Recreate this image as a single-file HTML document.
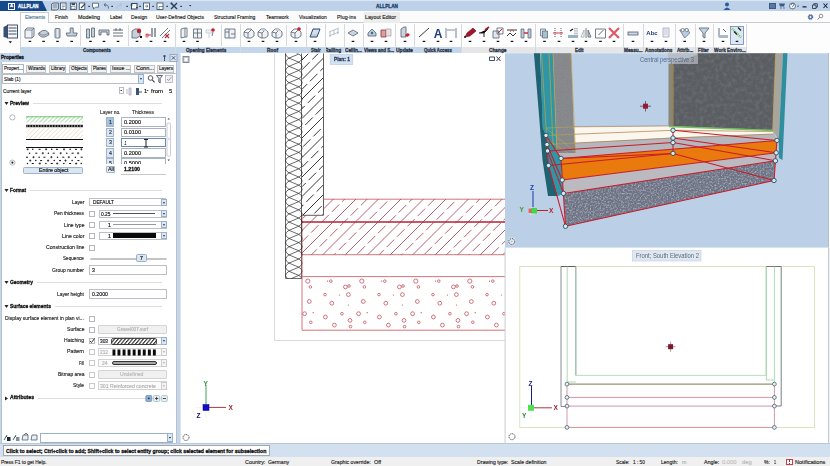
<!DOCTYPE html>
<html><head><meta charset="utf-8">
<style>
*{box-sizing:border-box;margin:0;padding:0}
html,body{width:830px;height:466px;overflow:hidden;background:#fff;font-family:"Liberation Sans",sans-serif;color:#222;position:relative}
.a{position:absolute}
svg{will-change:transform}
.t{position:absolute;white-space:nowrap;transform-origin:0 50%;-webkit-text-stroke:0.15px currentColor}
</style></head><body>
<div class="a" style="left:0.00px;top:0.00px;width:830.00px;height:11.00px;background:#bdd1e9;"></div>
<div class="a" style="left:0.00px;top:0.00px;width:830.00px;height:1.00px;background:#dbe6f2;"></div>
<div class="a" style="left:0;top:0.5px;width:47px;height:10.5px;background:#16488c;clip-path:polygon(0 0,42px 0,47px 10.5px,0 10.5px)"></div>
<div class="a" style="left:8.00px;top:2.50px;width:7.00px;height:7.00px;background:none;border:1px solid #fff;"></div>
<div class="t" style="left:10.20px;top:4.31px;font-size:4.27px;line-height:4.27px;color:#fff;font-weight:bold;-webkit-text-stroke:0.3px currentColor;transform:scaleX(0.998);">A</div>
<div class="t" style="left:18.00px;top:3.61px;font-size:5.70px;line-height:5.70px;color:#fff;font-weight:bold;-webkit-text-stroke:0.3px currentColor;transform:scaleX(0.771);">ALLPLAN</div>
<div class="t" style="left:376.00px;top:3.91px;font-size:5.70px;line-height:5.70px;color:#1d3a68;font-weight:bold;-webkit-text-stroke:0.3px currentColor;transform:scaleX(0.827);">ALLPLAN</div>
<div class="a" style="left:0.00px;top:11.00px;width:830.00px;height:11.50px;background:#fbfbfb;"></div>
<div class="a" style="left:0.00px;top:22.00px;width:830.00px;height:0.80px;background:#c8ccd2;"></div>
<div class="a" style="left:20.00px;top:11.50px;width:29.00px;height:11.50px;background:#ffffff;border:0.6px solid #c8ccd2;border-bottom:none;"></div>
<div class="a" style="left:364.00px;top:11.50px;width:35.50px;height:11.00px;background:#ececec;"></div>
<div class="t" style="left:25.00px;top:15.21px;font-size:5.70px;line-height:5.70px;color:#4e7a96;transform:scaleX(0.850);">Elements</div>
<div class="t" style="left:55.00px;top:15.21px;font-size:5.70px;line-height:5.70px;color:#1a1a1a;transform:scaleX(0.855);">Finish</div>
<div class="t" style="left:78.00px;top:15.21px;font-size:5.70px;line-height:5.70px;color:#1a1a1a;transform:scaleX(0.951);">Modeling</div>
<div class="t" style="left:109.50px;top:15.21px;font-size:5.70px;line-height:5.70px;color:#1a1a1a;transform:scaleX(0.868);">Label</div>
<div class="t" style="left:130.60px;top:15.21px;font-size:5.70px;line-height:5.70px;color:#1a1a1a;transform:scaleX(0.919);">Design</div>
<div class="t" style="left:155.90px;top:15.21px;font-size:5.70px;line-height:5.70px;color:#1a1a1a;transform:scaleX(0.881);">User-Defined Objects</div>
<div class="t" style="left:214.20px;top:15.21px;font-size:5.70px;line-height:5.70px;color:#1a1a1a;transform:scaleX(0.885);">Structural Framing</div>
<div class="t" style="left:266.00px;top:15.21px;font-size:5.70px;line-height:5.70px;color:#1a1a1a;transform:scaleX(0.874);">Teamwork</div>
<div class="t" style="left:298.90px;top:15.21px;font-size:5.70px;line-height:5.70px;color:#1a1a1a;transform:scaleX(0.868);">Visualization</div>
<div class="t" style="left:336.90px;top:15.21px;font-size:5.70px;line-height:5.70px;color:#1a1a1a;transform:scaleX(0.932);">Plug-ins</div>
<div class="t" style="left:365.00px;top:15.21px;font-size:5.70px;line-height:5.70px;color:#1a1a1a;transform:scaleX(0.923);">Layout Editor</div>
<div class="a" style="left:0.00px;top:23.00px;width:830.00px;height:24.50px;background:#fdfdfd;"></div>
<div class="a" style="left:0.00px;top:11.00px;width:20.00px;height:42.50px;background:#fdfdfd;"></div>
<div class="a" style="left:20.00px;top:47.30px;width:441.40px;height:6.00px;background:#c3d6ec;"></div>
<div class="a" style="left:461.40px;top:47.30px;width:285.00px;height:6.00px;background:#e6e6e8;"></div>
<div class="a" style="left:746.40px;top:47.30px;width:83.60px;height:6.00px;background:#fdfdfd;"></div>
<div class="t" style="left:83.00px;top:48.24px;font-size:5.22px;line-height:5.22px;color:#2a3444;font-weight:bold;-webkit-text-stroke:0.3px currentColor;transform:scaleX(0.868);">Components</div>
<div class="t" style="left:186.40px;top:48.24px;font-size:5.22px;line-height:5.22px;color:#2a3444;font-weight:bold;-webkit-text-stroke:0.3px currentColor;transform:scaleX(0.881);">Opening Elements</div>
<div class="t" style="left:267.00px;top:48.24px;font-size:5.22px;line-height:5.22px;color:#2a3444;font-weight:bold;-webkit-text-stroke:0.3px currentColor;transform:scaleX(0.925);">Roof</div>
<div class="t" style="left:310.80px;top:48.24px;font-size:5.22px;line-height:5.22px;color:#2a3444;font-weight:bold;-webkit-text-stroke:0.3px currentColor;transform:scaleX(0.835);">Stair</div>
<div class="t" style="left:325.30px;top:48.24px;font-size:5.22px;line-height:5.22px;color:#2a3444;font-weight:bold;-webkit-text-stroke:0.3px currentColor;transform:scaleX(0.924);">Railing</div>
<div class="t" style="left:344.60px;top:48.24px;font-size:5.22px;line-height:5.22px;color:#2a3444;font-weight:bold;-webkit-text-stroke:0.3px currentColor;transform:scaleX(0.904);">Ceilin...</div>
<div class="t" style="left:363.90px;top:48.24px;font-size:5.22px;line-height:5.22px;color:#2a3444;font-weight:bold;-webkit-text-stroke:0.3px currentColor;transform:scaleX(0.866);">Views and S...</div>
<div class="t" style="left:396.40px;top:48.24px;font-size:5.22px;line-height:5.22px;color:#2a3444;font-weight:bold;-webkit-text-stroke:0.3px currentColor;transform:scaleX(0.954);">Update</div>
<div class="t" style="left:424.00px;top:48.24px;font-size:5.22px;line-height:5.22px;color:#2a3444;font-weight:bold;-webkit-text-stroke:0.3px currentColor;transform:scaleX(0.816);">Quick Access</div>
<div class="t" style="left:488.90px;top:48.24px;font-size:5.22px;line-height:5.22px;color:#2a3444;font-weight:bold;-webkit-text-stroke:0.3px currentColor;transform:scaleX(0.913);">Change</div>
<div class="t" style="left:574.90px;top:48.24px;font-size:5.22px;line-height:5.22px;color:#2a3444;font-weight:bold;-webkit-text-stroke:0.3px currentColor;transform:scaleX(0.851);">Edit</div>
<div class="t" style="left:623.70px;top:48.24px;font-size:5.22px;line-height:5.22px;color:#2a3444;font-weight:bold;-webkit-text-stroke:0.3px currentColor;transform:scaleX(0.902);">Measu...</div>
<div class="t" style="left:644.80px;top:48.24px;font-size:5.22px;line-height:5.22px;color:#2a3444;font-weight:bold;-webkit-text-stroke:0.3px currentColor;transform:scaleX(0.902);">Annotations</div>
<div class="t" style="left:676.50px;top:48.24px;font-size:5.22px;line-height:5.22px;color:#2a3444;font-weight:bold;-webkit-text-stroke:0.3px currentColor;transform:scaleX(0.891);">Attrib...</div>
<div class="t" style="left:698.20px;top:48.24px;font-size:5.22px;line-height:5.22px;color:#2a3444;font-weight:bold;-webkit-text-stroke:0.3px currentColor;transform:scaleX(0.845);">Filter</div>
<div class="t" style="left:713.90px;top:48.24px;font-size:5.22px;line-height:5.22px;color:#2a3444;font-weight:bold;-webkit-text-stroke:0.3px currentColor;transform:scaleX(0.911);">Work Enviro...</div>
<div class="a" style="left:20.00px;top:23.00px;width:0.80px;height:30.30px;background:#d0d4da;"></div>
<div class="a" style="left:175.00px;top:24.00px;width:0.70px;height:29.30px;background:#d6d9de;"></div>
<div class="a" style="left:239.50px;top:24.00px;width:0.70px;height:29.30px;background:#d6d9de;"></div>
<div class="a" style="left:305.50px;top:24.00px;width:0.70px;height:29.30px;background:#d6d9de;"></div>
<div class="a" style="left:324.80px;top:24.00px;width:0.70px;height:29.30px;background:#d6d9de;"></div>
<div class="a" style="left:343.50px;top:24.00px;width:0.70px;height:29.30px;background:#d6d9de;"></div>
<div class="a" style="left:362.80px;top:24.00px;width:0.70px;height:29.30px;background:#d6d9de;"></div>
<div class="a" style="left:395.10px;top:24.00px;width:0.70px;height:29.30px;background:#d6d9de;"></div>
<div class="a" style="left:414.40px;top:24.00px;width:0.70px;height:29.30px;background:#d6d9de;"></div>
<div class="a" style="left:461.40px;top:24.00px;width:0.70px;height:29.30px;background:#d6d9de;"></div>
<div class="a" style="left:535.30px;top:24.00px;width:0.70px;height:29.30px;background:#d6d9de;"></div>
<div class="a" style="left:623.00px;top:24.00px;width:0.70px;height:29.30px;background:#d6d9de;"></div>
<div class="a" style="left:642.70px;top:24.00px;width:0.70px;height:29.30px;background:#d6d9de;"></div>
<div class="a" style="left:675.30px;top:24.00px;width:0.70px;height:29.30px;background:#d6d9de;"></div>
<div class="a" style="left:694.60px;top:24.00px;width:0.70px;height:29.30px;background:#d6d9de;"></div>
<div class="a" style="left:713.30px;top:24.00px;width:0.70px;height:29.30px;background:#d6d9de;"></div>
<div class="a" style="left:746.40px;top:24.00px;width:0.70px;height:29.30px;background:#d6d9de;"></div>
<div class="a" style="left:80.00px;top:25.00px;width:0.70px;height:21.00px;background:#d6d9de;"></div>
<div class="a" style="left:128.00px;top:25.00px;width:0.70px;height:21.00px;background:#d6d9de;"></div>
<div class="a" style="left:220.50px;top:25.00px;width:0.70px;height:21.00px;background:#d6d9de;"></div>
<div class="a" style="left:286.30px;top:25.00px;width:0.70px;height:21.00px;background:#d6d9de;"></div>
<svg class="a" style="left:0;top:0" width="830" height="60" viewBox="0 0 830 60">
<path d="M51.5,4 l2,-1 h5 v6 l-2,1 h-5z" fill="#c8d2de" stroke="#34465e" stroke-width="0.7"/><path d="M53,5 h4 M53,7 h4" stroke="#34465e" stroke-width="0.5"/><rect x="60.5" y="3" width="5.5" height="6.5" fill="#fff" stroke="#34465e" stroke-width="0.8"/><path d="M61.8,5 h3 M61.8,6.5 h3 M61.8,8 h2" stroke="#34465e" stroke-width="0.5"/><rect x="70.3" y="3" width="6" height="6.5" fill="#fff" stroke="#34465e" stroke-width="0.8"/><rect x="71.5" y="3.2" width="3.5" height="2" fill="#34465e"/><rect x="71.5" y="6.5" width="3.5" height="2.5" fill="#fff" stroke="#34465e" stroke-width="0.4"/><rect x="79.3" y="3" width="5.5" height="6.5" fill="#fff" stroke="#34465e" stroke-width="0.8"/><path d="M81,8 l4,-4" stroke="#34465e" stroke-width="1.1"/><path d="M92.5,3.2 h6 v4 h-3 l-2,1.8 v-1.8 h-1z" fill="#fff" stroke="#34465e" stroke-width="0.7"/><path d="M108.5,8.5 q0,-4.5 -4.5,-3.5 M104,5 l1.5,-1.8 M104,5 l1.8,1.3" fill="none" stroke="#5a6c84" stroke-width="1"/><path d="M117,8.5 q0,-4.5 4.5,-3.5 M121.5,5 l-1.5,-1.8 M121.5,5 l-1.8,1.3" fill="none" stroke="#b0bcc8" stroke-width="0.9"/><rect x="131.5" y="3.5" width="5.5" height="5.5" fill="#fff" stroke="#34465e" stroke-width="1"/><path d="M130.5,5 h2 M136,7.5 h2" stroke="#34465e" stroke-width="1"/><rect x="143.5" y="3" width="6" height="6.5" fill="#fff" stroke="#34465e" stroke-width="0.8"/><path d="M145,6.2 h3 M146.5,4.8 l1.5,1.4 l-1.5,1.4" fill="none" stroke="#34465e" stroke-width="0.6"/><rect x="157" y="3" width="6" height="6.5" fill="#fff" stroke="#34465e" stroke-width="0.8"/><path d="M159,9.5 v-3 h4" fill="none" stroke="#34465e" stroke-width="0.6"/><path d="M171,3 l6,6 M177,3 l-6,6" stroke="#2a3a52" stroke-width="1.3"/><circle cx="171.5" cy="3.5" r="1" fill="#2a3a52"/><rect x="88.4" y="5.8" width="1.4" height="1.2" fill="#222"/><rect x="111.4" y="5.8" width="1.4" height="1.2" fill="#222"/><rect x="126.4" y="5.8" width="1.4" height="1.2" fill="#222"/><rect x="139.4" y="5.8" width="1.4" height="1.2" fill="#222"/><rect x="152.4" y="5.8" width="1.4" height="1.2" fill="#222"/><rect x="166.4" y="5.8" width="1.4" height="1.2" fill="#222"/><rect x="180.4" y="5.8" width="1.4" height="1.2" fill="#222"/><path d="M189,5 h2.4 l-1.2,1.4z" fill="#333"/><path d="M723.5,10 q3.5,-5 7,0z" fill="#2f5a98"/><circle cx="727" cy="4.6" r="2" fill="#2f5a98"/><rect x="769" y="3" width="7" height="6" fill="#3a5a88"/><path d="M770,5 h5 M770,7 h5" stroke="#c3d5ea" stroke-width="0.5"/><path d="M779,3.5 h6 l-1,3 h-4z" fill="#3a5a88"/><circle cx="781" cy="8" r="0.7" fill="#3a5a88"/><circle cx="784" cy="8" r="0.7" fill="#3a5a88"/><circle cx="792.5" cy="6" r="3" fill="#f4f6f8" stroke="#3a4a60" stroke-width="0.7"/><path d="M791.3,5 q0,-1.5 1.3,-1.5 q1.3,0 1.3,1.2 q0,0.8 -1.2,1.3 v0.8" fill="none" stroke="#3a4a60" stroke-width="0.7"/><circle cx="792.6" cy="8.2" r="0.4" fill="#3a4a60"/><path d="M797,5.8 h2 l-1,1.2z" fill="#333"/><rect x="802.5" y="6.2" width="4" height="1.3" fill="#1a2a40"/><path d="M812.5,5 h3.5 v3.5 h-3.5z M813.8,5 v-1.3 h3.5 v3.5 h-1.3" fill="none" stroke="#1a2a40" stroke-width="0.8"/><path d="M823.5,3.5 l4,4.5 M827.5,3.5 l-4,4.5" stroke="#1a2a40" stroke-width="1.1"/><circle cx="810.5" cy="17" r="2.2" fill="#5a7aa8" stroke="#4a6a98" stroke-width="1.2" stroke-dasharray="1 0.6"/><circle cx="810.5" cy="17" r="0.9" fill="#f4f6f8"/><circle cx="821" cy="16" r="1.8" fill="none" stroke="#707880" stroke-width="0.8"/><path d="M819.7,17.3 l-2,2.2" stroke="#707880" stroke-width="1"/><path d="M3.5,27 l4,-2 v13 l-4,-1z" fill="#3a5070"/><rect x="7.5" y="25" width="10" height="13" fill="#f4f6fa" stroke="#2a4060" stroke-width="0.9"/><path d="M8.5,28 h8 M8.5,31 h8 M8.5,34 h8" stroke="#2a4060" stroke-width="0.9"/><path d="M25.0,30 l2,-2 h7 v8 l-2,2 h-7z" fill="#eef2f6" stroke="#56606e" stroke-width="0.8"/><path d="M25.0,30 h7 v8 M32.0,30 l2,-2" fill="none" stroke="#56606e" stroke-width="0.7"/><path d="M38.8,33 l4,-2.5 h3 l3,2.5 v2 l-4,2 h-3 l-3,-2z" fill="#c4d0dc" stroke="#56606e" stroke-width="0.8"/><path d="M38.8,33 l3,2 h3 l4,-2" fill="none" stroke="#56606e" stroke-width="0.6"/><rect x="55.0" y="28.5" width="5" height="9.5" rx="1" fill="#c4d0dc" stroke="#56606e" stroke-width="0.8"/><line x1="57.5" y1="29" x2="57.5" y2="37.5" stroke="#eef" stroke-width="0.8"/><path d="M70.2,28 h3 v5 h4 l-1,3 h-9 l-1,-3 h4z" fill="#c4d0dc" stroke="#56606e" stroke-width="0.8"/><path d="M86.5,29 h3 v9 h-3z M91.5,28 h3 v9 h-3z" fill="#c4d0dc" stroke="#56606e" stroke-width="0.8"/><path d="M99,35 v-5 h10 v5 h-2 v-3 h-6 v3z" fill="#c4d0dc" stroke="#56606e" stroke-width="0.8"/><path d="M113,30 h10 M113,33 h10 M113,36 h10 M116,28 v3 M120,28 v3" fill="none" stroke="#56606e" stroke-width="0.9"/><path d="M132,31 l3,-2 h5 v7 l-3,2 h-5z" fill="#c4d0dc" stroke="#56606e" stroke-width="0.8"/><circle cx="139" cy="31" r="2.2" fill="#c8202e"/><rect x="140" y="36" width="2" height="2" fill="#111"/><path d="M152,28 v9 M155,28 v9" stroke="#56606e" stroke-width="1.2"/><path d="M146,35 h5" stroke="#c8202e" stroke-width="0.9"/><rect x="146" y="34" width="2" height="3" fill="none" stroke="#c8202e" stroke-width="0.6"/><path d="M160,36 l8,-8 M162,38 l8,-8" stroke="#56606e" stroke-width="0.8"/><path d="M165,34 l4,4 M169,34 l-4,4" stroke="#c8202e" stroke-width="1.1"/><path d="M181,29 l4,-1 v9 l-4,1z" fill="#eef2f6" stroke="#56606e" stroke-width="0.8"/><path d="M185,28 h2 v9 h-2" fill="none" stroke="#56606e" stroke-width="0.8"/><path d="M193.5,29 h8 v9 h-8z M197.5,29 v9 M193.5,33 h8" fill="#eef2f6" stroke="#56606e" stroke-width="0.8"/><path d="M206,30 h6 v3 h-6z M209,33 v5" fill="#eef2f6" stroke="#c4d0dc" stroke-width="0.9"/><circle cx="213" cy="30" r="1.8" fill="#c8202e"/><line x1="213" y1="32" x2="212" y2="36" stroke="#56606e" stroke-width="0.8"/><path d="M225,29 h10 v9 h-10z M229,29 v9 M225,32 h4 M231,34 h4" fill="#eef2f6" stroke="#56606e" stroke-width="0.8"/><path d="M244,36 v-4 l3,-3 h4 l3,3 v4 l-3,2 h-4z M244,32 l4,1 l4,-4 M248,33 v5" fill="#eef2f6" stroke="#56606e" stroke-width="0.8"/><path d="M258,36 v-4 l3,-3 h4 l3,3 v4 l-3,2 h-4z M258,32 l4,1 l4,-4 M262,33 v5" fill="#eef2f6" stroke="#56606e" stroke-width="0.8"/><path d="M261,29 h4 l2,2 h-5z" fill="#c4d0dc"/><path d="M272,36 v-4 l3,-3 h4 l3,3 v4 l-3,2 h-4z M272,32 l4,1 l4,-4 M276,33 v5" fill="#eef2f6" stroke="#56606e" stroke-width="0.8"/><path d="M275,29 h4 l2,2 h-5z" fill="#c4d0dc"/><path d="M291,36 v-4 l3,-3 h4 l3,3 v4 l-3,2 h-4z M291,32 l4,1 l4,-4 M295,33 v5" fill="#eef2f6" stroke="#56606e" stroke-width="0.8"/><circle cx="299" cy="29" r="1.8" fill="#c8202e"/><path d="M310,37 l3,-8 h7 l-3,8z" fill="#c4d0dc" stroke="#2c4a7a" stroke-width="1"/><path d="M312,33 h6 M313,31 h6" stroke="#fff" stroke-width="0.6"/><path d="M329,36 l10,-4 M329,32 l10,-4 M330,32 v5 M334,30 v5 M338,29 v5" fill="none" stroke="#a8b4c0" stroke-width="0.8"/><path d="M348,33 l5,-3 l5,3 l-5,3z" fill="#c4d0dc" stroke="#56606e" stroke-width="0.8"/><path d="M350,33 l3,2 M353,31 l3,2" stroke="#dfe8f0" stroke-width="0.6"/><path d="M368,36 v-3 l4,-4 l4,4 v3z" fill="#b8cce0" stroke="#56606e" stroke-width="0.8"/><circle cx="372" cy="33" r="1.2" fill="#56606e"/><path d="M381,30 h5 v7 h-5z" fill="#d8a0a0" stroke="#903040" stroke-width="0.8"/><path d="M386,29 h5 v7 h-5z" fill="#e8e0e0" stroke="#a09090" stroke-width="0.6"/><path d="M401,37 v-8 l3,-2 h2 v10z" fill="#c8d4e0" stroke="#56606e" stroke-width="0.8"/><path d="M405,35 l3,-2 l2,2 l-3,2z" fill="#c8202e"/><line x1="419" y1="37" x2="429" y2="28" stroke="#222" stroke-width="0.9"/><text x="438" y="37.5" text-anchor="middle" font-family="Liberation Sans" font-weight="bold" font-size="12" fill="#1e3c78">A</text><path d="M446,28 v10 M456,28 v10" stroke="#8a9aaa" stroke-width="1.2"/><path d="M447,30 h8" stroke="#56606e" stroke-width="0.7"/><path d="M465,37 l2,-4 l6,-5 l3,3 l-6,5z" fill="#a01828" stroke="#701020" stroke-width="0.6"/><circle cx="465" cy="37" r="1" fill="#111"/><path d="M479,33 h5 l4,-4" stroke="#222" stroke-width="1"/><path d="M484,33 v4" stroke="#222" stroke-width="1"/><path d="M485,30 l4,-3" stroke="#a01828" stroke-width="1.6"/><path d="M493,31 h6 v7 h-6z" fill="#e0e8f0" stroke="#56606e" stroke-width="0.8"/><path d="M497,28 h6 v6 h-6z" fill="none" stroke="#56606e" stroke-width="0.8"/><path d="M498,33 l4,-4" stroke="#c8202e" stroke-width="1"/><path d="M507,30 h10 M507,36 l3,-3 l3,3 l3,-3" fill="none" stroke="#222" stroke-width="0.9"/><path d="M510,32 l2,-2 l2,2" fill="none" stroke="#c8202e" stroke-width="0.6"/><path d="M521,29 h3 v9 h-3z M528,29 h3 v9 h-3z" fill="#b8c8d8" stroke="#56606e" stroke-width="0.7"/><path d="M524,33 h4" stroke="#c8202e" stroke-width="1.4"/><path d="M540.5,29 h5 v7 h-5z" fill="#dfe6ee" stroke="#56606e" stroke-width="0.7"/><path d="M542.5,31 h5 v7 h-5z" fill="#a8c0d8" stroke="#56606e" stroke-width="0.7"/><path d="M555,28 v10 M561,28 v10" stroke="#56606e" stroke-width="1" stroke-dasharray="1 1"/><path d="M553,33 h10" stroke="#c8202e" stroke-width="0.9"/><path d="M568,37 h10 M577,28 v8 M575,28 v8" stroke="#56606e" stroke-width="0.8" stroke-dasharray="1 0.7"/><rect x="568" y="35" width="10" height="3" fill="#98b0c8"/><path d="M570,31 l3,-2" stroke="#222" stroke-width="1.4"/><path d="M581,37 l3,-7 v7z" fill="none" stroke="#a0a8b0" stroke-width="0.8"/><path d="M586,28 v10" stroke="#56606e" stroke-width="0.8"/><path d="M588,37 v-7 l3,7z" fill="#c0d0e0" stroke="#56606e" stroke-width="0.8"/><path d="M595.5,29 h10 v9 h-10z" fill="none" stroke="#56606e" stroke-width="0.8"/><path d="M598.5,35 l5,-5" stroke="#222" stroke-width="0.7"/><path d="M609,28 l10,10 M619,28 l-10,10" stroke="#e25566" stroke-width="2.1"/><rect x="628" y="32" width="10" height="3" fill="#c8d8e8" stroke="#56606e" stroke-width="0.8"/><text x="652" y="35" text-anchor="middle" font-family="Liberation Sans" font-weight="bold" font-size="6" fill="#1e3c78">Abc</text><path d="M663,28 h6 v9 h-6z" fill="#eef" stroke="#a0a8b0" stroke-width="0.8"/><path d="M665,29 v6 M667,29 v6" stroke="#a0a8b0" stroke-width="0.5"/><path d="M679.7,30 l5,8 l5,-5 l-2,-4z" fill="#b8cce4" stroke="#56606e" stroke-width="0.7"/><circle cx="682.7" cy="30" r="1.6" fill="#fff" stroke="#56606e" stroke-width="0.7"/><circle cx="686.7" cy="30" r="1.6" fill="#fff" stroke="#56606e" stroke-width="0.7"/><path d="M699,28 h10 l-4,5 v5 l-2,-1 v-4z" fill="#c0d4e8" stroke="#56606e" stroke-width="0.8"/><path d="M719,28 v9 h9" fill="none" stroke="#56606e" stroke-width="0.9"/><path d="M723,29 l3,3" stroke="#222" stroke-width="0.7"/><rect x="719" y="35" width="9" height="2" fill="#a8bcd0"/><rect x="730.5" y="26.5" width="13" height="18" fill="#dde8f4" stroke="#6a88b0" stroke-width="0.8"/><path d="M732,28.5 l9,9" stroke="#70c060" stroke-width="2.4" stroke-dasharray="1 1"/><path d="M734,31.5 l3,3 M738,27.5 l3,3" stroke="#222" stroke-width="1.3"/><rect x="28.60" y="40.80" width="2.6" height="1.2" fill="#111"/><rect x="42.30" y="40.80" width="2.6" height="1.2" fill="#111"/><rect x="56.20" y="40.80" width="2.6" height="1.2" fill="#111"/><rect x="70.40" y="40.80" width="2.6" height="1.2" fill="#111"/><rect x="89.20" y="40.80" width="2.6" height="1.2" fill="#111"/><rect x="102.70" y="40.80" width="2.6" height="1.2" fill="#111"/><rect x="116.70" y="40.80" width="2.6" height="1.2" fill="#111"/><rect x="135.70" y="40.80" width="2.6" height="1.2" fill="#111"/><rect x="149.70" y="40.80" width="2.6" height="1.2" fill="#111"/><rect x="163.70" y="40.80" width="2.6" height="1.2" fill="#111"/><rect x="182.70" y="40.80" width="2.6" height="1.2" fill="#111"/><rect x="196.20" y="40.80" width="2.6" height="1.2" fill="#111"/><rect x="247.70" y="40.80" width="2.6" height="1.2" fill="#111"/><rect x="261.70" y="40.80" width="2.6" height="1.2" fill="#111"/><rect x="275.70" y="40.80" width="2.6" height="1.2" fill="#111"/><rect x="294.70" y="40.80" width="2.6" height="1.2" fill="#111"/><rect x="313.70" y="40.80" width="2.6" height="1.2" fill="#111"/><rect x="351.70" y="40.80" width="2.6" height="1.2" fill="#111"/><rect x="370.70" y="40.80" width="2.6" height="1.2" fill="#111"/><rect x="384.70" y="40.80" width="2.6" height="1.2" fill="#111"/><rect x="403.70" y="40.80" width="2.6" height="1.2" fill="#111"/><rect x="422.70" y="40.80" width="2.6" height="1.2" fill="#111"/><rect x="436.70" y="40.80" width="2.6" height="1.2" fill="#111"/><rect x="449.70" y="40.80" width="2.6" height="1.2" fill="#111"/><rect x="468.70" y="40.80" width="2.6" height="1.2" fill="#111"/><rect x="482.70" y="40.80" width="2.6" height="1.2" fill="#111"/><rect x="496.70" y="40.80" width="2.6" height="1.2" fill="#111"/><rect x="510.70" y="40.80" width="2.6" height="1.2" fill="#111"/><rect x="524.70" y="40.80" width="2.6" height="1.2" fill="#111"/><rect x="543.20" y="40.80" width="2.6" height="1.2" fill="#111"/><rect x="557.70" y="40.80" width="2.6" height="1.2" fill="#111"/><rect x="571.70" y="40.80" width="2.6" height="1.2" fill="#111"/><rect x="584.70" y="40.80" width="2.6" height="1.2" fill="#111"/><rect x="599.20" y="40.80" width="2.6" height="1.2" fill="#111"/><rect x="612.70" y="40.80" width="2.6" height="1.2" fill="#111"/><rect x="631.70" y="40.80" width="2.6" height="1.2" fill="#111"/><rect x="650.70" y="40.80" width="2.6" height="1.2" fill="#111"/><rect x="664.70" y="40.80" width="2.6" height="1.2" fill="#111"/><rect x="683.40" y="40.80" width="2.6" height="1.2" fill="#111"/><rect x="702.70" y="40.80" width="2.6" height="1.2" fill="#111"/><rect x="721.70" y="40.80" width="2.6" height="1.2" fill="#111"/><rect x="735.70" y="40.80" width="2.6" height="1.2" fill="#111"/><path d="M8.6,41.2 h3.4 l-1.7,2z" fill="#111"/></svg>
<div class="a" style="left:0.00px;top:53.30px;width:180.00px;height:391.00px;background:#c3d6ec;"></div>
<div class="t" style="left:1.00px;top:55.21px;font-size:5.70px;line-height:5.70px;color:#111;font-weight:bold;-webkit-text-stroke:0.3px currentColor;transform:scaleX(0.816);">Properties</div>
<div class="a" style="left:161.00px;top:54.50px;width:7.00px;height:7.00px;background:#c3d6ec;"></div>
<svg class="a" style="left:160px;top:54px" width="20" height="8"><path d="M4.5,1.5 v4 M3,2 h3 M4.5,5.5 v1.5" stroke="#334" stroke-width="0.9"/><rect x="10" y="0.5" width="7" height="7" fill="#d6e4f4" stroke="#9ab"/><path d="M11.8,2.2 l3.4,3.4 M15.2,2.2 l-3.4,3.4" stroke="#334" stroke-width="0.8"/></svg>
<div class="a" style="left:0.50px;top:62.00px;width:176.30px;height:382.00px;background:#ffffff;border-left:0.8px solid #b8c0c8;border-right:0.8px solid #b8c0c8;"></div>
<div class="a" style="left:2.00px;top:63.50px;width:22.00px;height:9.50px;background:#ffffff;border:0.7px solid #b0b8c0;border-bottom:none;"></div>
<div class="t" style="left:3.50px;top:66.44px;font-size:5.22px;line-height:5.22px;color:#111;transform:scaleX(0.884);">Propert...</div>
<div class="a" style="left:26.00px;top:64.50px;width:20.00px;height:8.00px;background:#f2f2f2;border:0.7px solid #c0c4c8;"></div>
<div class="t" style="left:27.50px;top:66.44px;font-size:5.22px;line-height:5.22px;color:#111;transform:scaleX(0.901);">Wizards</div>
<div class="a" style="left:49.00px;top:64.50px;width:17.00px;height:8.00px;background:#f2f2f2;border:0.7px solid #c0c4c8;"></div>
<div class="t" style="left:50.50px;top:66.44px;font-size:5.22px;line-height:5.22px;color:#111;transform:scaleX(0.877);">Library</div>
<div class="a" style="left:69.00px;top:64.50px;width:19.00px;height:8.00px;background:#f2f2f2;border:0.7px solid #c0c4c8;"></div>
<div class="t" style="left:70.50px;top:66.44px;font-size:5.22px;line-height:5.22px;color:#111;transform:scaleX(0.903);">Objects</div>
<div class="a" style="left:91.00px;top:64.50px;width:16.00px;height:8.00px;background:#f2f2f2;border:0.7px solid #c0c4c8;"></div>
<div class="t" style="left:92.50px;top:66.44px;font-size:5.22px;line-height:5.22px;color:#111;transform:scaleX(0.814);">Planes</div>
<div class="a" style="left:110.00px;top:64.50px;width:21.00px;height:8.00px;background:#f2f2f2;border:0.7px solid #c0c4c8;"></div>
<div class="t" style="left:111.50px;top:66.44px;font-size:5.22px;line-height:5.22px;color:#111;transform:scaleX(0.984);">Issue ...</div>
<div class="a" style="left:134.00px;top:64.50px;width:21.00px;height:8.00px;background:#f2f2f2;border:0.7px solid #c0c4c8;"></div>
<div class="t" style="left:135.50px;top:66.44px;font-size:5.22px;line-height:5.22px;color:#111;transform:scaleX(1.068);">Conn...</div>
<div class="a" style="left:157.00px;top:64.50px;width:17.00px;height:8.00px;background:#f2f2f2;border:0.7px solid #c0c4c8;"></div>
<div class="t" style="left:158.50px;top:66.44px;font-size:5.22px;line-height:5.22px;color:#111;transform:scaleX(0.893);">Layers</div>
<div class="a" style="left:0.50px;top:72.80px;width:176.00px;height:0.70px;background:#b8c0c8;"></div>
<div class="a" style="left:2.00px;top:74.00px;width:142.00px;height:10.30px;background:#fff;border:0.7px solid #bcc0c4;"></div>
<div class="t" style="left:4.00px;top:76.91px;font-size:5.70px;line-height:5.70px;color:#111;transform:scaleX(0.827);">Slab (1)</div>
<div class="a" style="left:138.00px;top:74.30px;width:6.00px;height:9.80px;background:#dce8f6;border:0.6px solid #9ab0cc;"></div>
<svg class="a" style="left:138px;top:74.3px" width="6" height="9.8"><path d="M1.8,4.2 h2.4 l-1.2,1.5z" fill="#222"/></svg>
<svg class="a" style="left:146px;top:74px" width="30" height="11"><circle cx="4.5" cy="4" r="2.3" fill="none" stroke="#445" stroke-width="0.9"/><path d="M6.2,5.8 l2.4,2.6" stroke="#445" stroke-width="1.2"/><path d="M10.5,1.5 h6 l-2.3,3 v4.5 l-1.4,-1 v-3.5z" fill="#dde6f0" stroke="#445" stroke-width="0.8"/><rect x="19.5" y="1.5" width="7" height="7" fill="#f0f0f0" stroke="#aab" stroke-width="0.7"/><path d="M21,5 l1.5,1.5 l3,-3.5" fill="none" stroke="#889" stroke-width="0.8"/></svg>
<div class="t" style="left:3.00px;top:88.61px;font-size:5.70px;line-height:5.70px;color:#111;transform:scaleX(0.865);">Current layer</div>
<div class="a" style="left:119.00px;top:87.00px;width:4.50px;height:7.00px;background:#fff;border:0.6px solid #bbb;"></div>
<svg class="a" style="left:119px;top:87px" width="60" height="9"><path d="M1.2,3 h2 l-1,1.3z" fill="#222"/><path d="M8,2 v5 M10,1 h2 v7 h-2z" stroke="#aab" stroke-width="0.8" fill="#dde"/><path d="M17,1 h3 v7 h-3z" fill="#3a5478"/><path d="M20,5 h3" stroke="#3a5478" stroke-width="1"/></svg>
<div class="t" style="left:143.50px;top:88.61px;font-size:5.70px;line-height:5.70px;color:#111;transform:scaleX(0.998);">1</div>
<svg class="a" style="left:146px;top:89px" width="4" height="3"><path d="M0.3,1 h2.4 l-1.2,1.3z" fill="#333"/></svg>
<div class="t" style="left:151.00px;top:88.61px;font-size:5.70px;line-height:5.70px;color:#111;transform:scaleX(1.053);">from</div>
<div class="t" style="left:168.50px;top:88.61px;font-size:5.70px;line-height:5.70px;color:#111;transform:scaleX(0.998);">5</div>
<svg class="a" style="left:4px;top:101.2px" width="5" height="5"><path d="M0.5,1 h4 l-2,3z" fill="#222"/></svg>
<div class="t" style="left:10.00px;top:100.81px;font-size:5.70px;line-height:5.70px;color:#111;font-weight:bold;-webkit-text-stroke:0.3px currentColor;transform:scaleX(0.882);">Preview</div>
<div class="a" style="left:33.00px;top:103.00px;width:129.00px;height:1.20px;background:#dedede;"></div>
<svg class="a" style="left:8px;top:113px" width="10" height="55"><circle cx="4.4" cy="4.4" r="2.6" fill="#fff" stroke="#889" stroke-width="0.6"/><circle cx="4.4" cy="49.6" r="2.6" fill="#fff" stroke="#889" stroke-width="0.6"/><circle cx="4.4" cy="49.6" r="1.1" fill="#222"/></svg>
<svg class="a" style="left:25px;top:114px" width="60" height="52" viewBox="25 114 60 52"><defs><pattern id="gh" width="3" height="3" patternUnits="userSpaceOnUse" patternTransform="rotate(45)"><line x1="0" y1="0" x2="0" y2="3" stroke="#50b850" stroke-width="0.9"/></pattern><pattern id="oh" width="3.2" height="3.2" patternUnits="userSpaceOnUse" patternTransform="rotate(45)"><line x1="0" y1="0" x2="0" y2="3.2" stroke="#d8b890" stroke-width="0.7"/></pattern></defs><rect x="26" y="116.5" width="57" height="6" fill="url(#gh)"/><line x1="26" y1="116.8" x2="83" y2="116.8" stroke="#60c060" stroke-width="0.9"/><rect x="26" y="124.8" width="57" height="2.4" fill="#111"/><line x1="26.5" y1="126" x2="83" y2="126" stroke="#fff" stroke-width="1" stroke-dasharray="1.2 1.6"/><rect x="26" y="128" width="57" height="10.5" fill="url(#oh)"/><line x1="26" y1="139.5" x2="83" y2="139.5" stroke="#111" stroke-width="1"/><line x1="26" y1="147.5" x2="83" y2="147.5" stroke="#111" stroke-width="1"/><path d="M26.6,149.3 h2.2 M27.7,148.20000000000002 v2.2" stroke="#111" stroke-width="0.7"/><circle cx="32.8" cy="149.3" r="0.75" fill="#111"/><rect x="38.6" y="148.8" width="2" height="1" fill="#111"/><path d="M45.0,149.3 h2.2 M46.1,148.20000000000002 v2.2" stroke="#111" stroke-width="0.7"/><circle cx="51.7" cy="149.3" r="0.75" fill="#111"/><rect x="56.0" y="148.8" width="2" height="1" fill="#111"/><path d="M62.9,149.3 h2.2 M64.0,148.20000000000002 v2.2" stroke="#111" stroke-width="0.7"/><circle cx="70.1" cy="149.3" r="0.75" fill="#111"/><rect x="74.9" y="148.8" width="2" height="1" fill="#111"/><path d="M80.3,149.3 h2.2 M81.4,148.20000000000002 v2.2" stroke="#111" stroke-width="0.7"/><circle cx="29.5" cy="153.2" r="0.75" fill="#111"/><rect x="35.3" y="152.7" width="2" height="1" fill="#111"/><path d="M41.7,153.2 h2.2 M42.8,152.1 v2.2" stroke="#111" stroke-width="0.7"/><circle cx="48.4" cy="153.2" r="0.75" fill="#111"/><rect x="52.7" y="152.7" width="2" height="1" fill="#111"/><path d="M59.6,153.2 h2.2 M60.7,152.1 v2.2" stroke="#111" stroke-width="0.7"/><circle cx="66.8" cy="153.2" r="0.75" fill="#111"/><rect x="71.6" y="152.7" width="2" height="1" fill="#111"/><path d="M77.0,153.2 h2.2 M78.1,152.1 v2.2" stroke="#111" stroke-width="0.7"/><rect x="26.0" y="156.7" width="2" height="1" fill="#111"/><path d="M32.4,157.2 h2.2 M33.5,156.1 v2.2" stroke="#111" stroke-width="0.7"/><circle cx="39.1" cy="157.2" r="0.75" fill="#111"/><rect x="43.4" y="156.7" width="2" height="1" fill="#111"/><path d="M50.3,157.2 h2.2 M51.4,156.1 v2.2" stroke="#111" stroke-width="0.7"/><circle cx="57.5" cy="157.2" r="0.75" fill="#111"/><rect x="62.3" y="156.7" width="2" height="1" fill="#111"/><path d="M67.7,157.2 h2.2 M68.8,156.1 v2.2" stroke="#111" stroke-width="0.7"/><circle cx="75.4" cy="157.2" r="0.75" fill="#111"/><rect x="80.7" y="156.7" width="2" height="1" fill="#111"/><path d="M29.1,160.6 h2.2 M30.2,159.5 v2.2" stroke="#111" stroke-width="0.7"/><circle cx="35.8" cy="160.6" r="0.75" fill="#111"/><rect x="40.1" y="160.1" width="2" height="1" fill="#111"/><path d="M47.0,160.6 h2.2 M48.1,159.5 v2.2" stroke="#111" stroke-width="0.7"/><circle cx="54.2" cy="160.6" r="0.75" fill="#111"/><rect x="59.0" y="160.1" width="2" height="1" fill="#111"/><path d="M64.4,160.6 h2.2 M65.5,159.5 v2.2" stroke="#111" stroke-width="0.7"/><circle cx="72.1" cy="160.6" r="0.75" fill="#111"/><rect x="77.4" y="160.1" width="2" height="1" fill="#111"/><circle cx="27.5" cy="163.5" r="0.75" fill="#111"/><rect x="31.8" y="163.0" width="2" height="1" fill="#111"/><path d="M38.7,163.5 h2.2 M39.8,162.4 v2.2" stroke="#111" stroke-width="0.7"/><circle cx="45.9" cy="163.5" r="0.75" fill="#111"/><rect x="50.7" y="163.0" width="2" height="1" fill="#111"/><path d="M56.1,163.5 h2.2 M57.2,162.4 v2.2" stroke="#111" stroke-width="0.7"/><circle cx="63.8" cy="163.5" r="0.75" fill="#111"/><rect x="69.1" y="163.0" width="2" height="1" fill="#111"/><path d="M75.0,163.5 h2.2 M76.1,162.4 v2.2" stroke="#111" stroke-width="0.7"/><circle cx="81.2" cy="163.5" r="0.75" fill="#111"/></svg>
<div class="a" style="left:23.40px;top:166.50px;width:60.00px;height:7.20px;background:#dbe6f3;border:0.7px solid #9fb3cc;border-radius:1.5px;"></div>
<div class="t" style="left:38.50px;top:167.94px;font-size:5.22px;line-height:5.22px;color:#111;transform:scaleX(1.016);">Entire object</div>
<div class="t" style="left:99.50px;top:109.84px;font-size:5.22px;line-height:5.22px;color:#333;transform:scaleX(0.941);">Layer no.</div>
<div class="t" style="left:132.00px;top:109.84px;font-size:5.22px;line-height:5.22px;color:#333;transform:scaleX(0.935);">Thickness</div>
<div class="a" style="left:106.30px;top:117.20px;width:7.80px;height:9.50px;background:#a9c2dd;border:0.6px solid #9fb3cc;"></div>
<div class="t" style="left:108.70px;top:119.84px;font-size:5.22px;line-height:5.22px;color:#1a2a40;transform:scaleX(0.998);">1</div>
<div class="a" style="left:121.30px;top:117.20px;width:44.30px;height:9.50px;background:#fff;border:0.6px solid #a8b4c0;"></div>
<div class="t" style="left:124.00px;top:119.94px;font-size:5.22px;line-height:5.22px;color:#111;transform:scaleX(1.064);">0.2000</div>
<div class="a" style="left:106.30px;top:127.50px;width:7.80px;height:9.50px;background:#dce7f3;border:0.6px solid #9fb3cc;"></div>
<div class="t" style="left:108.70px;top:130.14px;font-size:5.22px;line-height:5.22px;color:#1a2a40;transform:scaleX(0.998);">2</div>
<div class="a" style="left:121.30px;top:127.50px;width:44.30px;height:9.50px;background:#fff;border:0.6px solid #a8b4c0;"></div>
<div class="t" style="left:124.00px;top:130.24px;font-size:5.22px;line-height:5.22px;color:#111;transform:scaleX(1.064);">0.0100</div>
<div class="a" style="left:106.30px;top:137.80px;width:7.80px;height:9.50px;background:#dce7f3;border:0.6px solid #9fb3cc;"></div>
<div class="t" style="left:108.70px;top:140.44px;font-size:5.22px;line-height:5.22px;color:#1a2a40;transform:scaleX(0.998);">3</div>
<div class="a" style="left:121.30px;top:137.80px;width:44.30px;height:9.50px;background:#fff;border:0.7px solid #6a8ab0;"></div>
<div class="t" style="left:124.00px;top:140.54px;font-size:5.22px;line-height:5.22px;color:#111;transform:scaleX(0.574);">.1</div>
<div class="a" style="left:106.30px;top:148.10px;width:7.80px;height:9.50px;background:#dce7f3;border:0.6px solid #9fb3cc;"></div>
<div class="t" style="left:108.70px;top:150.74px;font-size:5.22px;line-height:5.22px;color:#1a2a40;transform:scaleX(0.998);">4</div>
<div class="a" style="left:121.30px;top:148.10px;width:44.30px;height:9.50px;background:#fff;border:0.6px solid #a8b4c0;"></div>
<div class="t" style="left:124.00px;top:150.84px;font-size:5.22px;line-height:5.22px;color:#111;transform:scaleX(1.064);">0.2000</div>
<div class="a" style="left:106.30px;top:158.40px;width:7.80px;height:5.50px;background:#dce7f3;border:0.6px solid #9fb3cc;border-bottom:none;"></div>
<div class="a" style="left:121.30px;top:158.40px;width:44.30px;height:5.50px;background:#fff;border:0.6px solid #a8b4c0;border-bottom:none;"></div>
<div class="a" style="left:100px;top:158.4px;width:70px;height:5.6px;overflow:hidden"><div class="t" style="left:8.70px;top:2.14px;font-size:5.22px;line-height:5.22px;color:#1a2a40;transform:scaleX(0.998);">5</div>
<div class="t" style="left:24.00px;top:2.24px;font-size:5.22px;line-height:5.22px;color:#111;transform:scaleX(1.064);">0.5000</div>
</div>
<div class="a" style="left:100.00px;top:164.00px;width:70.00px;height:1.20px;background:#fff;"></div>
<svg class="a" style="left:143px;top:139px" width="6" height="9"><path d="M1,0.5 h4 M3,0.5 v7.5 M1,8 h4" stroke="#222" stroke-width="1"/></svg>
<svg class="a" style="left:166px;top:116px" width="6" height="48"><path d="M1.5,3.5 h2.4 l-1.2,-1.4z M1.5,43.5 h2.4 l-1.2,1.4z" fill="#444"/><rect x="1" y="7" width="3.5" height="33" rx="1" fill="#fff" stroke="#aab" stroke-width="0.6"/><path d="M2,22 h1.5 M2,23.5 h1.5" stroke="#888" stroke-width="0.4"/></svg>
<div class="a" style="left:106.30px;top:165.80px;width:8.50px;height:7.30px;background:#e8eef6;border:0.6px solid #9fb3cc;border-radius:1px;"></div>
<div class="t" style="left:107.50px;top:167.34px;font-size:5.22px;line-height:5.22px;color:#111;transform:scaleX(1.033);">All</div>
<div class="t" style="left:124.00px;top:166.90px;font-size:5.51px;line-height:5.51px;color:#111;font-weight:bold;-webkit-text-stroke:0.3px currentColor;transform:scaleX(0.949);">1.2100</div>
<div class="a" style="left:121.00px;top:173.50px;width:45.00px;height:0.60px;background:#c8c8c8;"></div>
<svg class="a" style="left:4px;top:188.3px" width="5" height="5"><path d="M0.5,1 h4 l-2,3z" fill="#222"/></svg>
<div class="t" style="left:10.00px;top:187.91px;font-size:5.70px;line-height:5.70px;color:#111;font-weight:bold;-webkit-text-stroke:0.3px currentColor;transform:scaleX(0.828);">Format</div>
<div class="a" style="left:30.00px;top:190.10px;width:132.00px;height:1.20px;background:#dedede;"></div>
<div class="t" style="left:71.50px;top:200.21px;font-size:5.70px;line-height:5.70px;color:#222;transform:scaleX(0.877);">Layer</div>
<div class="t" style="left:54.00px;top:211.31px;font-size:5.70px;line-height:5.70px;color:#222;transform:scaleX(0.845);">Pen thickness</div>
<div class="t" style="left:63.50px;top:222.51px;font-size:5.70px;line-height:5.70px;color:#222;transform:scaleX(0.886);">Line type</div>
<div class="t" style="left:61.50px;top:233.91px;font-size:5.70px;line-height:5.70px;color:#222;transform:scaleX(0.910);">Line color</div>
<div class="t" style="left:45.50px;top:245.41px;font-size:5.70px;line-height:5.70px;color:#222;transform:scaleX(0.907);">Construction line</div>
<div class="t" style="left:63.00px;top:256.21px;font-size:5.70px;line-height:5.70px;color:#222;transform:scaleX(0.818);">Sequence</div>
<div class="t" style="left:52.00px;top:267.61px;font-size:5.70px;line-height:5.70px;color:#222;transform:scaleX(0.871);">Group number</div>
<div class="a" style="left:89.30px;top:198.30px;width:77.20px;height:8.20px;background:#fff;border:0.7px solid #bcc0c4;"></div>
<div class="t" style="left:92.50px;top:200.34px;font-size:5.22px;line-height:5.22px;color:#111;transform:scaleX(0.908);">DEFAULT</div>
<div class="a" style="left:160.50px;top:198.50px;width:6.00px;height:7.80px;background:#dce8f6;border:0.6px solid #9ab0cc;"></div>
<svg class="a" style="left:160.5px;top:198.5px" width="6" height="7.8"><path d="M1.8,3.2 h2.4 l-1.2,1.5z" fill="#222"/></svg>
<div class="a" style="left:89.30px;top:210.50px;width:6.00px;height:6.00px;background:#fff;border:0.7px solid #b4b8bc;"></div>
<div class="a" style="left:98.50px;top:209.50px;width:68.00px;height:8.20px;background:#fff;border:0.7px solid #bcc0c4;"></div>
<div class="t" style="left:100.50px;top:211.54px;font-size:5.22px;line-height:5.22px;color:#111;transform:scaleX(0.934);">0.25</div>
<div class="a" style="left:113.00px;top:213.30px;width:42.00px;height:0.80px;background:#555;"></div>
<div class="a" style="left:160.50px;top:209.70px;width:6.00px;height:7.80px;background:#dce8f6;border:0.6px solid #9ab0cc;"></div>
<svg class="a" style="left:160.5px;top:209.7px" width="6" height="7.8"><path d="M1.8,3.2 h2.4 l-1.2,1.5z" fill="#222"/></svg>
<div class="a" style="left:89.30px;top:221.50px;width:6.00px;height:6.00px;background:#fff;border:0.7px solid #b4b8bc;"></div>
<div class="a" style="left:98.50px;top:220.50px;width:68.00px;height:8.20px;background:#fff;border:0.7px solid #bcc0c4;"></div>
<div class="t" style="left:107.50px;top:222.54px;font-size:5.22px;line-height:5.22px;color:#111;transform:scaleX(0.998);">1</div>
<div class="a" style="left:113.00px;top:224.10px;width:43.00px;height:1.20px;background:#9a9a9a;"></div>
<div class="a" style="left:160.50px;top:220.70px;width:6.00px;height:7.80px;background:#dce8f6;border:0.6px solid #9ab0cc;"></div>
<svg class="a" style="left:160.5px;top:220.7px" width="6" height="7.8"><path d="M1.8,3.2 h2.4 l-1.2,1.5z" fill="#222"/></svg>
<div class="a" style="left:89.30px;top:232.50px;width:6.00px;height:6.00px;background:#fff;border:0.7px solid #b4b8bc;"></div>
<div class="a" style="left:98.50px;top:231.50px;width:68.00px;height:8.20px;background:#fff;border:0.7px solid #bcc0c4;"></div>
<div class="t" style="left:107.50px;top:233.54px;font-size:5.22px;line-height:5.22px;color:#111;transform:scaleX(0.998);">1</div>
<div class="a" style="left:113.00px;top:233.20px;width:43.00px;height:4.60px;background:#0a0a0a;"></div>
<div class="a" style="left:160.50px;top:231.70px;width:6.00px;height:7.80px;background:#dce8f6;border:0.6px solid #9ab0cc;"></div>
<svg class="a" style="left:160.5px;top:231.7px" width="6" height="7.8"><path d="M1.8,3.2 h2.4 l-1.2,1.5z" fill="#222"/></svg>
<div class="a" style="left:89.30px;top:244.50px;width:6.00px;height:6.00px;background:#fff;border:0.7px solid #b4b8bc;"></div>
<div class="a" style="left:89.50px;top:257.60px;width:77.00px;height:1.60px;background:#e8e8e8;border:0.5px solid #c4c4c4;border-radius:1px;"></div>
<div class="a" style="left:136.00px;top:254.00px;width:11.00px;height:8.00px;background:#dbe6f3;border:0.7px solid #98aecb;border-radius:1.5px;"></div>
<div class="t" style="left:140.00px;top:256.04px;font-size:5.22px;line-height:5.22px;color:#111;transform:scaleX(0.998);">7</div>
<div class="a" style="left:89.30px;top:265.00px;width:77.50px;height:10.00px;background:#fff;border:0.7px solid #bcc0c4;"></div>
<div class="t" style="left:92.00px;top:267.84px;font-size:5.22px;line-height:5.22px;color:#111;transform:scaleX(0.998);">3</div>
<svg class="a" style="left:4px;top:280px" width="5" height="5"><path d="M0.5,1 h4 l-2,3z" fill="#222"/></svg>
<div class="t" style="left:10.00px;top:279.61px;font-size:5.70px;line-height:5.70px;color:#111;font-weight:bold;-webkit-text-stroke:0.3px currentColor;transform:scaleX(0.864);">Geometry</div>
<div class="a" style="left:37.00px;top:281.80px;width:125.00px;height:1.20px;background:#dedede;"></div>
<div class="t" style="left:57.00px;top:291.61px;font-size:5.70px;line-height:5.70px;color:#222;transform:scaleX(0.861);">Layer height</div>
<div class="a" style="left:89.20px;top:288.80px;width:77.60px;height:9.90px;background:#fff;border:0.7px solid #bcc0c4;"></div>
<div class="t" style="left:92.00px;top:291.64px;font-size:5.22px;line-height:5.22px;color:#111;transform:scaleX(0.998);">0.2000</div>
<svg class="a" style="left:4px;top:304.2px" width="5" height="5"><path d="M0.5,1 h4 l-2,3z" fill="#222"/></svg>
<div class="t" style="left:10.00px;top:303.81px;font-size:5.70px;line-height:5.70px;color:#111;font-weight:bold;-webkit-text-stroke:0.3px currentColor;transform:scaleX(0.869);">Surface elements</div>
<div class="a" style="left:55.00px;top:306.00px;width:107.00px;height:1.20px;background:#dedede;"></div>
<div class="t" style="left:5.00px;top:316.11px;font-size:5.70px;line-height:5.70px;color:#222;transform:scaleX(0.881);">Display surface element in plan vi...</div>
<div class="a" style="left:89.30px;top:316.00px;width:6.00px;height:6.00px;background:#fff;border:0.7px solid #b4b8bc;"></div>
<div class="t" style="left:66.50px;top:327.21px;font-size:5.70px;line-height:5.70px;color:#222;transform:scaleX(0.891);">Surface</div>
<div class="t" style="left:64.00px;top:338.21px;font-size:5.70px;line-height:5.70px;color:#222;transform:scaleX(0.889);">Hatching</div>
<div class="t" style="left:67.00px;top:349.41px;font-size:5.70px;line-height:5.70px;color:#222;transform:scaleX(0.925);">Pattern</div>
<div class="t" style="left:79.00px;top:360.61px;font-size:5.70px;line-height:5.70px;color:#222;transform:scaleX(0.687);">Fill</div>
<div class="t" style="left:57.50px;top:372.01px;font-size:5.70px;line-height:5.70px;color:#222;transform:scaleX(0.862);">Bitmap area</div>
<div class="t" style="left:73.00px;top:383.31px;font-size:5.70px;line-height:5.70px;color:#222;transform:scaleX(0.868);">Style</div>
<div class="a" style="left:89.30px;top:326.50px;width:6.00px;height:6.00px;background:#fff;border:0.7px solid #b4b8bc;"></div>
<div class="a" style="left:97.50px;top:325.00px;width:69.00px;height:8.60px;background:#f0f0f0;border:0.6px solid #d4d4d4;border-radius:1px;"></div>
<div class="t" style="left:117.00px;top:327.24px;font-size:5.22px;line-height:5.22px;color:#b0b0b0;transform:scaleX(0.905);">Gravel007.surf</div>
<div class="a" style="left:89.30px;top:337.50px;width:6.00px;height:6.00px;background:#fff;border:0.7px solid #b4b8bc;"></div>
<svg class="a" style="left:89.3px;top:337.5px" width="6" height="6"><path d="M1,3 l1.5,1.5 l3,-4" fill="none" stroke="#222" stroke-width="0.9"/></svg>
<div class="a" style="left:97.50px;top:336.50px;width:69.00px;height:8.40px;background:#fff;border:0.7px solid #bcc0c4;"></div>
<div class="t" style="left:100.00px;top:338.54px;font-size:5.22px;line-height:5.22px;color:#111;transform:scaleX(0.918);">303</div>
<svg class="a" style="left:111px;top:337.5px" width="46" height="7"><defs><pattern id="hp" width="3.6" height="7" patternUnits="userSpaceOnUse" patternTransform="skewX(-40)"><rect x="0" y="0" width="1.5" height="7" fill="#333"/></pattern></defs><rect x="0.5" y="0.5" width="45" height="6" rx="1.5" fill="url(#hp)" stroke="#222" stroke-width="0.8"/></svg>
<div class="a" style="left:160.50px;top:336.70px;width:6.00px;height:8.00px;background:#dce8f6;border:0.6px solid #9ab0cc;"></div>
<svg class="a" style="left:160.5px;top:336.7px" width="6" height="8"><path d="M1.8,3.3 h2.4 l-1.2,1.5z" fill="#222"/></svg>
<div class="a" style="left:89.30px;top:349.00px;width:6.00px;height:6.00px;background:#fff;border:0.7px solid #c8cacc;"></div>
<div class="a" style="left:97.50px;top:347.70px;width:69.00px;height:8.40px;background:#fbfbfb;border:0.6px solid #d4d4d4;"></div>
<div class="t" style="left:100.00px;top:349.84px;font-size:5.22px;line-height:5.22px;color:#b0b0b0;transform:scaleX(0.918);">212</div>
<svg class="a" style="left:111px;top:348.5px" width="46" height="7"><rect x="1.5" y="0.5" width="2.9" height="6" fill="#0a0a0a"/><rect x="6.5" y="0.5" width="2.9" height="6" fill="#0a0a0a"/><rect x="11.6" y="0.5" width="2.9" height="6" fill="#0a0a0a"/><rect x="16.6" y="0.5" width="2.9" height="6" fill="#0a0a0a"/><rect x="21.7" y="0.5" width="2.9" height="6" fill="#0a0a0a"/><rect x="26.8" y="0.5" width="2.9" height="6" fill="#0a0a0a"/><rect x="31.8" y="0.5" width="2.9" height="6" fill="#0a0a0a"/><rect x="36.9" y="0.5" width="2.9" height="6" fill="#0a0a0a"/><rect x="41.9" y="0.5" width="2.9" height="6" fill="#0a0a0a"/></svg>
<div class="a" style="left:160.50px;top:347.90px;width:6.00px;height:8.00px;background:#f4f4f4;border:0.6px solid #ccc;"></div>
<svg class="a" style="left:160.5px;top:347.9px" width="6" height="8"><path d="M1.8,3.3 h2.4 l-1.2,1.5z" fill="#aaa"/></svg>
<div class="a" style="left:89.30px;top:360.00px;width:6.00px;height:6.00px;background:#fff;border:0.7px solid #c8cacc;"></div>
<div class="a" style="left:97.50px;top:358.90px;width:69.00px;height:8.40px;background:#fbfbfb;border:0.6px solid #d4d4d4;"></div>
<div class="t" style="left:101.50px;top:360.94px;font-size:5.22px;line-height:5.22px;color:#b0b0b0;transform:scaleX(0.946);">24</div>
<div class="a" style="left:111.50px;top:360.60px;width:45.00px;height:4.80px;background:#a8a8a8;border:1px solid #333;border-radius:2px;"></div>
<div class="a" style="left:160.50px;top:359.10px;width:6.00px;height:8.00px;background:#f4f4f4;border:0.6px solid #ccc;"></div>
<svg class="a" style="left:160.5px;top:359.1px" width="6" height="8"><path d="M1.8,3.3 h2.4 l-1.2,1.5z" fill="#aaa"/></svg>
<div class="a" style="left:89.30px;top:371.50px;width:6.00px;height:6.00px;background:#fff;border:0.7px solid #c8cacc;"></div>
<div class="a" style="left:97.50px;top:370.10px;width:69.00px;height:8.60px;background:#f0f0f0;border:0.6px solid #d4d4d4;border-radius:1px;"></div>
<div class="t" style="left:120.00px;top:372.24px;font-size:5.22px;line-height:5.22px;color:#b8b8b8;transform:scaleX(0.987);">Undefined</div>
<div class="a" style="left:89.30px;top:382.80px;width:6.00px;height:6.00px;background:#fff;border:0.7px solid #c8cacc;"></div>
<div class="a" style="left:97.50px;top:381.40px;width:69.00px;height:8.60px;background:#fbfbfb;border:0.6px solid #d4d4d4;"></div>
<div class="t" style="left:100.00px;top:383.54px;font-size:5.22px;line-height:5.22px;color:#b0b0b0;transform:scaleX(0.984);">301 Reinforced concrete</div>
<div class="a" style="left:160.50px;top:381.60px;width:6.00px;height:8.20px;background:#f4f4f4;border:0.6px solid #ccc;"></div>
<svg class="a" style="left:160.5px;top:381.6px" width="6" height="8.2"><path d="M1.8,3.3999999999999995 h2.4 l-1.2,1.5z" fill="#aaa"/></svg>
<svg class="a" style="left:4px;top:395.8px" width="5" height="5"><path d="M1,0.5 v4 l3,-2z" fill="#222"/></svg>
<div class="t" style="left:10.00px;top:395.41px;font-size:5.70px;line-height:5.70px;color:#111;font-weight:bold;-webkit-text-stroke:0.3px currentColor;transform:scaleX(0.892);">Attributes</div>
<div class="a" style="left:38.00px;top:397.60px;width:124.00px;height:1.20px;background:#dedede;"></div>
<svg class="a" style="left:145px;top:394.5px" width="24" height="7"><rect x="0.8" y="0.5" width="6" height="6" rx="1" fill="#8fb0d8" stroke="#5a7aa8" stroke-width="0.6"/><path d="M2.5,2.8 h2.6 l-1.3,1.6z" fill="#223"/><rect x="8.6" y="0.5" width="6" height="6" rx="1" fill="#e8eef6" stroke="#8aa" stroke-width="0.6"/><path d="M10,3.5 h3.2 M11.6,1.9 v3.2" stroke="#223" stroke-width="0.8"/><rect x="16.4" y="0.5" width="6" height="6" rx="1" fill="#e8eef6" stroke="#8aa" stroke-width="0.6"/><path d="M17.8,3.5 h3.2" stroke="#223" stroke-width="0.8"/></svg>
<svg class="a" style="left:2px;top:432px" width="38" height="11"><path d="M2,8 l3,-5 M4,4 l2,2" stroke="#3a5478" stroke-width="0.9"/><rect x="5" y="5" width="3.5" height="4" fill="#1a2a40"/><path d="M11,8 l3,-5 M13,4 l2,2" stroke="#3a5478" stroke-width="0.9"/><rect x="14" y="5" width="3.5" height="4" fill="#8090a0"/><path d="M20,8 l1,-5 h5 v5z M22,3 l2,-2 l2,2" fill="#e8eef6" stroke="#3a4a60" stroke-width="0.7"/><path d="M29,8 l1,-5 h5 v5z" fill="#e8eef6" stroke="#3a4a60" stroke-width="0.7"/></svg>
<div class="a" style="left:40.00px;top:432.50px;width:133.00px;height:10.00px;background:#fff;border:0.7px solid #9ab0cc;"></div>
<div class="a" style="left:167.00px;top:432.80px;width:6.00px;height:9.40px;background:#dce8f6;border:0.6px solid #9ab0cc;"></div>
<svg class="a" style="left:167px;top:432.8px" width="6" height="9.4"><path d="M1.8,4.0 h2.4 l-1.2,1.5z" fill="#222"/></svg>
<svg class="a" style="left:0;top:0" width="830" height="466" viewBox="0 0 830 466">
<defs><clipPath id="cpl"><rect x="180" y="53.5" width="325" height="391"/></clipPath><clipPath id="cwall"><rect x="302" y="53.5" width="21" height="161.5"/></clipPath><clipPath id="cslab"><path d="M323,199 H505 V254.7 H302 V215 H323z"/></clipPath></defs>
<g clip-path="url(#cpl)">
<rect x="180" y="53.5" width="325" height="391" fill="#fff"/>
<rect x="179.6" y="53.5" width="0.9" height="391" fill="#c0c8d0"/>
<path d="M274.5,53 V340.5 H505" fill="none" stroke="#d0d0d0" stroke-width="0.8"/>
<g clip-path="url(#cwall)" stroke="#222" stroke-width="0.9" fill="none"><line x1="302" y1="21.00" x2="325" y2="-2.00"/><line x1="302" y1="30.75" x2="325" y2="7.75" stroke-dasharray="10.6 4" stroke-dashoffset="8.0"/><line x1="302" y1="40.50" x2="325" y2="17.50"/><line x1="302" y1="50.25" x2="325" y2="27.25" stroke-dasharray="10.6 4" stroke-dashoffset="11.3"/><line x1="302" y1="60.00" x2="325" y2="37.00"/><line x1="302" y1="69.75" x2="325" y2="46.75" stroke-dasharray="10.6 4" stroke-dashoffset="0.0"/><line x1="302" y1="79.50" x2="325" y2="56.50"/><line x1="302" y1="89.25" x2="325" y2="66.25" stroke-dasharray="10.6 4" stroke-dashoffset="3.3"/><line x1="302" y1="99.00" x2="325" y2="76.00"/><line x1="302" y1="108.75" x2="325" y2="85.75" stroke-dasharray="10.6 4" stroke-dashoffset="6.6"/><line x1="302" y1="118.50" x2="325" y2="95.50"/><line x1="302" y1="128.25" x2="325" y2="105.25" stroke-dasharray="10.6 4" stroke-dashoffset="9.9"/><line x1="302" y1="138.00" x2="325" y2="115.00"/><line x1="302" y1="147.75" x2="325" y2="124.75" stroke-dasharray="10.6 4" stroke-dashoffset="13.2"/><line x1="302" y1="157.50" x2="325" y2="134.50"/><line x1="302" y1="167.25" x2="325" y2="144.25" stroke-dasharray="10.6 4" stroke-dashoffset="1.9"/><line x1="302" y1="177.00" x2="325" y2="154.00"/><line x1="302" y1="186.75" x2="325" y2="163.75" stroke-dasharray="10.6 4" stroke-dashoffset="5.2"/><line x1="302" y1="196.50" x2="325" y2="173.50"/><line x1="302" y1="206.25" x2="325" y2="183.25" stroke-dasharray="10.6 4" stroke-dashoffset="8.5"/><line x1="302" y1="216.00" x2="325" y2="193.00"/><line x1="302" y1="225.75" x2="325" y2="202.75" stroke-dasharray="10.6 4" stroke-dashoffset="11.8"/><line x1="302" y1="235.50" x2="325" y2="212.50"/><line x1="302" y1="245.25" x2="325" y2="222.25" stroke-dasharray="10.6 4" stroke-dashoffset="0.5"/><line x1="302" y1="255.00" x2="325" y2="232.00"/><line x1="302" y1="264.75" x2="325" y2="241.75" stroke-dasharray="10.6 4" stroke-dashoffset="3.8"/><line x1="302" y1="274.50" x2="325" y2="251.50"/><line x1="302" y1="284.25" x2="325" y2="261.25" stroke-dasharray="10.6 4" stroke-dashoffset="7.1"/><line x1="302" y1="294.00" x2="325" y2="271.00"/><line x1="302" y1="303.75" x2="325" y2="280.75" stroke-dasharray="10.6 4" stroke-dashoffset="10.4"/><line x1="302" y1="313.50" x2="325" y2="290.50"/><line x1="302" y1="323.25" x2="325" y2="300.25" stroke-dasharray="10.6 4" stroke-dashoffset="13.7"/></g>
<path d="M323.5,53 V215.3 H302" fill="none" stroke="#333" stroke-width="0.8"/>
<g clip-path="url(#cslab)" stroke="#a84654" stroke-width="0.85" fill="none"><line x1="227.50" y1="260" x2="297.50" y2="190"/><line x1="238.75" y1="260" x2="308.75" y2="190" stroke-dasharray="10.6 4" stroke-dashoffset="9.5"/><line x1="250.00" y1="260" x2="320.00" y2="190"/><line x1="261.25" y1="260" x2="331.25" y2="190" stroke-dasharray="10.6 4" stroke-dashoffset="0.0"/><line x1="272.50" y1="260" x2="342.50" y2="190"/><line x1="283.75" y1="260" x2="353.75" y2="190" stroke-dasharray="10.6 4" stroke-dashoffset="5.1"/><line x1="295.00" y1="260" x2="365.00" y2="190"/><line x1="306.25" y1="260" x2="376.25" y2="190" stroke-dasharray="10.6 4" stroke-dashoffset="10.2"/><line x1="317.50" y1="260" x2="387.50" y2="190"/><line x1="328.75" y1="260" x2="398.75" y2="190" stroke-dasharray="10.6 4" stroke-dashoffset="0.7"/><line x1="340.00" y1="260" x2="410.00" y2="190"/><line x1="351.25" y1="260" x2="421.25" y2="190" stroke-dasharray="10.6 4" stroke-dashoffset="5.8"/><line x1="362.50" y1="260" x2="432.50" y2="190"/><line x1="373.75" y1="260" x2="443.75" y2="190" stroke-dasharray="10.6 4" stroke-dashoffset="10.9"/><line x1="385.00" y1="260" x2="455.00" y2="190"/><line x1="396.25" y1="260" x2="466.25" y2="190" stroke-dasharray="10.6 4" stroke-dashoffset="1.4"/><line x1="407.50" y1="260" x2="477.50" y2="190"/><line x1="418.75" y1="260" x2="488.75" y2="190" stroke-dasharray="10.6 4" stroke-dashoffset="6.5"/><line x1="430.00" y1="260" x2="500.00" y2="190"/><line x1="441.25" y1="260" x2="511.25" y2="190" stroke-dasharray="10.6 4" stroke-dashoffset="11.6"/><line x1="452.50" y1="260" x2="522.50" y2="190"/><line x1="463.75" y1="260" x2="533.75" y2="190" stroke-dasharray="10.6 4" stroke-dashoffset="2.1"/><line x1="475.00" y1="260" x2="545.00" y2="190"/><line x1="486.25" y1="260" x2="556.25" y2="190" stroke-dasharray="10.6 4" stroke-dashoffset="7.2"/><line x1="497.50" y1="260" x2="567.50" y2="190"/><line x1="508.75" y1="260" x2="578.75" y2="190" stroke-dasharray="10.6 4" stroke-dashoffset="12.3"/><line x1="520.00" y1="260" x2="590.00" y2="190"/><line x1="531.25" y1="260" x2="601.25" y2="190" stroke-dasharray="10.6 4" stroke-dashoffset="2.8"/><line x1="542.50" y1="260" x2="612.50" y2="190"/><line x1="553.75" y1="260" x2="623.75" y2="190" stroke-dasharray="10.6 4" stroke-dashoffset="7.9"/><line x1="565.00" y1="260" x2="635.00" y2="190"/><line x1="576.25" y1="260" x2="646.25" y2="190" stroke-dasharray="10.6 4" stroke-dashoffset="13.0"/><line x1="587.50" y1="260" x2="657.50" y2="190"/><line x1="598.75" y1="260" x2="668.75" y2="190" stroke-dasharray="10.6 4" stroke-dashoffset="3.5"/></g>
<path d="M323,199.2 H505 M302,254.7 H505 M302,215 V254.7" fill="none" stroke="#c9505c" stroke-width="0.8"/>
<line x1="302" y1="221.9" x2="505" y2="221.9" stroke="#b01a2a" stroke-width="1.5"/>
<line x1="302" y1="221.9" x2="505" y2="221.9" stroke="#e890a0" stroke-width="0.6" stroke-dasharray="0.7 1.6"/>
<clipPath id="cins"><rect x="284" y="53" width="19" height="225.4"/></clipPath><g stroke="#1a1a1a" stroke-width="0.65" fill="none"><g clip-path="url(#cins)"><path d="M289.00,49.90 L298.80,54.00 L289.00,58.10 L298.80,62.20 L289.00,66.30 L298.80,70.40 L289.00,74.50 L298.80,78.60 L289.00,82.70 L298.80,86.80 L289.00,90.90 L298.80,95.00 L289.00,99.10 L298.80,103.20 L289.00,107.30 L298.80,111.40 L289.00,115.50 L298.80,119.60 L289.00,123.70 L298.80,127.80 L289.00,131.90 L298.80,136.00 L289.00,140.10 L298.80,144.20 L289.00,148.30 L298.80,152.40 L289.00,156.50 L298.80,160.60 L289.00,164.70 L298.80,168.80 L289.00,172.90 L298.80,177.00 L289.00,181.10 L298.80,185.20 L289.00,189.30 L298.80,193.40 L289.00,197.50 L298.80,201.60 L289.00,205.70 L298.80,209.80 L289.00,213.90 L298.80,218.00 L289.00,222.10 L298.80,226.20 L289.00,230.30 L298.80,234.40 L289.00,238.50 L298.80,242.60 L289.00,246.70 L298.80,250.80 L289.00,254.90 L298.80,259.00 L289.00,263.10 L298.80,267.20 L289.00,271.30 L298.80,275.40 L289.00,279.50 L298.80,283.60 L289.00,287.70 L298.80,291.80 M289.0,49.90 Q282.2,54.00 289.0,58.10 M298.8,54.00 Q305.6,58.10 298.8,62.20 M289.0,58.10 Q282.2,62.20 289.0,66.30 M298.8,62.20 Q305.6,66.30 298.8,70.40 M289.0,66.30 Q282.2,70.40 289.0,74.50 M298.8,70.40 Q305.6,74.50 298.8,78.60 M289.0,74.50 Q282.2,78.60 289.0,82.70 M298.8,78.60 Q305.6,82.70 298.8,86.80 M289.0,82.70 Q282.2,86.80 289.0,90.90 M298.8,86.80 Q305.6,90.90 298.8,95.00 M289.0,90.90 Q282.2,95.00 289.0,99.10 M298.8,95.00 Q305.6,99.10 298.8,103.20 M289.0,99.10 Q282.2,103.20 289.0,107.30 M298.8,103.20 Q305.6,107.30 298.8,111.40 M289.0,107.30 Q282.2,111.40 289.0,115.50 M298.8,111.40 Q305.6,115.50 298.8,119.60 M289.0,115.50 Q282.2,119.60 289.0,123.70 M298.8,119.60 Q305.6,123.70 298.8,127.80 M289.0,123.70 Q282.2,127.80 289.0,131.90 M298.8,127.80 Q305.6,131.90 298.8,136.00 M289.0,131.90 Q282.2,136.00 289.0,140.10 M298.8,136.00 Q305.6,140.10 298.8,144.20 M289.0,140.10 Q282.2,144.20 289.0,148.30 M298.8,144.20 Q305.6,148.30 298.8,152.40 M289.0,148.30 Q282.2,152.40 289.0,156.50 M298.8,152.40 Q305.6,156.50 298.8,160.60 M289.0,156.50 Q282.2,160.60 289.0,164.70 M298.8,160.60 Q305.6,164.70 298.8,168.80 M289.0,164.70 Q282.2,168.80 289.0,172.90 M298.8,168.80 Q305.6,172.90 298.8,177.00 M289.0,172.90 Q282.2,177.00 289.0,181.10 M298.8,177.00 Q305.6,181.10 298.8,185.20 M289.0,181.10 Q282.2,185.20 289.0,189.30 M298.8,185.20 Q305.6,189.30 298.8,193.40 M289.0,189.30 Q282.2,193.40 289.0,197.50 M298.8,193.40 Q305.6,197.50 298.8,201.60 M289.0,197.50 Q282.2,201.60 289.0,205.70 M298.8,201.60 Q305.6,205.70 298.8,209.80 M289.0,205.70 Q282.2,209.80 289.0,213.90 M298.8,209.80 Q305.6,213.90 298.8,218.00 M289.0,213.90 Q282.2,218.00 289.0,222.10 M298.8,218.00 Q305.6,222.10 298.8,226.20 M289.0,222.10 Q282.2,226.20 289.0,230.30 M298.8,226.20 Q305.6,230.30 298.8,234.40 M289.0,230.30 Q282.2,234.40 289.0,238.50 M298.8,234.40 Q305.6,238.50 298.8,242.60 M289.0,238.50 Q282.2,242.60 289.0,246.70 M298.8,242.60 Q305.6,246.70 298.8,250.80 M289.0,246.70 Q282.2,250.80 289.0,254.90 M298.8,250.80 Q305.6,254.90 298.8,259.00 M289.0,254.90 Q282.2,259.00 289.0,263.10 M298.8,259.00 Q305.6,263.10 298.8,267.20 M289.0,263.10 Q282.2,267.20 289.0,271.30 M298.8,267.20 Q305.6,271.30 298.8,275.40 M289.0,271.30 Q282.2,275.40 289.0,279.50 M298.8,275.40 Q305.6,279.50 298.8,283.60 M289.0,279.50 Q282.2,283.60 289.0,287.70 M298.8,283.60 Q305.6,287.70 298.8,291.80 M289.0,287.70 Q282.2,291.80 289.0,295.90 M298.8,291.80 Q305.6,295.90 298.8,300.00"/></g><path d="M285.5,53 V278.5 H301.5 V53"/></g>
<path d="M302,254.7 V330.2 H505 M302,276.6 H505" fill="none" stroke="#c9505c" stroke-width="0.8"/>
<g stroke="#c04a58" stroke-width="0.75" fill="none"><circle cx="307.8" cy="281.1" r="2.10"/><circle cx="310.4" cy="286.9" r="1.30"/><circle cx="330.8" cy="281.1" r="1.30"/><circle cx="345.4" cy="286.9" r="1.90"/><circle cx="349.0" cy="286.0" r="1.30"/><circle cx="325.0" cy="294.6" r="1.30"/><circle cx="348.4" cy="294.6" r="1.90"/><circle cx="309.3" cy="301.5" r="1.90"/><circle cx="331.8" cy="303.2" r="1.90"/><circle cx="304.6" cy="313.7" r="1.90"/><circle cx="341.9" cy="313.7" r="1.30"/><circle cx="325.4" cy="317.0" r="1.90"/><circle cx="350.0" cy="320.4" r="1.90"/><circle cx="310.8" cy="322.3" r="1.30"/><circle cx="334.4" cy="325.1" r="1.90"/><circle cx="350.5" cy="326.6" r="1.30"/><circle cx="361.8" cy="281.1" r="2.10"/><circle cx="364.4" cy="286.9" r="1.30"/><circle cx="384.8" cy="281.1" r="1.30"/><circle cx="399.4" cy="286.9" r="1.90"/><circle cx="403.0" cy="286.0" r="1.30"/><circle cx="379.0" cy="294.6" r="1.30"/><circle cx="402.4" cy="294.6" r="1.90"/><circle cx="363.3" cy="301.5" r="1.90"/><circle cx="385.8" cy="303.2" r="1.90"/><circle cx="358.6" cy="313.7" r="1.90"/><circle cx="395.9" cy="313.7" r="1.30"/><circle cx="379.4" cy="317.0" r="1.90"/><circle cx="404.0" cy="320.4" r="1.90"/><circle cx="364.8" cy="322.3" r="1.30"/><circle cx="388.4" cy="325.1" r="1.90"/><circle cx="404.5" cy="326.6" r="1.30"/><circle cx="415.8" cy="281.1" r="2.10"/><circle cx="418.4" cy="286.9" r="1.30"/><circle cx="438.8" cy="281.1" r="1.30"/><circle cx="453.4" cy="286.9" r="1.90"/><circle cx="457.0" cy="286.0" r="1.30"/><circle cx="433.0" cy="294.6" r="1.30"/><circle cx="456.4" cy="294.6" r="1.90"/><circle cx="417.3" cy="301.5" r="1.90"/><circle cx="439.8" cy="303.2" r="1.90"/><circle cx="412.6" cy="313.7" r="1.90"/><circle cx="449.9" cy="313.7" r="1.30"/><circle cx="433.4" cy="317.0" r="1.90"/><circle cx="458.0" cy="320.4" r="1.90"/><circle cx="418.8" cy="322.3" r="1.30"/><circle cx="442.4" cy="325.1" r="1.90"/><circle cx="458.5" cy="326.6" r="1.30"/><circle cx="469.8" cy="281.1" r="2.10"/><circle cx="472.4" cy="286.9" r="1.30"/><circle cx="492.8" cy="281.1" r="1.30"/><circle cx="487.0" cy="294.6" r="1.30"/><circle cx="471.3" cy="301.5" r="1.90"/><circle cx="493.8" cy="303.2" r="1.90"/><circle cx="466.6" cy="313.7" r="1.90"/><circle cx="503.9" cy="313.7" r="1.30"/><circle cx="487.4" cy="317.0" r="1.90"/><circle cx="472.8" cy="322.3" r="1.30"/><circle cx="496.4" cy="325.1" r="1.90"/></g><g fill="#c04a58"><circle cx="339.4" cy="295.0" r="0.6"/><circle cx="313.2" cy="312.7" r="0.6"/><circle cx="348.4" cy="305.0" r="0.6"/><circle cx="327.6" cy="281.1" r="0.6"/><circle cx="393.4" cy="295.0" r="0.6"/><circle cx="367.2" cy="312.7" r="0.6"/><circle cx="402.4" cy="305.0" r="0.6"/><circle cx="381.6" cy="281.1" r="0.6"/><circle cx="447.4" cy="295.0" r="0.6"/><circle cx="421.2" cy="312.7" r="0.6"/><circle cx="456.4" cy="305.0" r="0.6"/><circle cx="435.6" cy="281.1" r="0.6"/><circle cx="501.4" cy="295.0" r="0.6"/><circle cx="475.2" cy="312.7" r="0.6"/><circle cx="510.4" cy="305.0" r="0.6"/><circle cx="489.6" cy="281.1" r="0.6"/></g>
<rect x="330.2" y="54.2" width="22.6" height="10.2" fill="#d3e1f0" stroke="#b4c6dc" stroke-width="0.6"/>
<path d="M489.5,57 h5 v3.5 h-5z" fill="none" stroke="#2a3a58" stroke-width="0.9"/><path d="M496.5,56.5 l4,4.5 M500.5,56.5 l-4,4.5" stroke="#2a3a58" stroke-width="1"/>
<rect x="183" y="56.5" width="6" height="6" fill="#c0c8d4" stroke="#687888" stroke-width="0.8"/><path d="M184.5,58 h3 v3 h-3z" fill="#fff"/>
<line x1="206" y1="385" x2="206" y2="407" stroke="#2a9a3a" stroke-width="0.9"/><line x1="206" y1="407.4" x2="226" y2="407.4" stroke="#a02030" stroke-width="0.9"/><line x1="195" y1="407.4" x2="206" y2="407.4" stroke="#e0e8e0" stroke-width="0.5"/><line x1="206" y1="407" x2="206" y2="418" stroke="#e0e8e0" stroke-width="0.5"/><rect x="203" y="404.5" width="6" height="6" fill="#1010c8" stroke="#000080" stroke-width="0.5"/><text x="203.5" y="385.5" font-family="Liberation Sans" font-size="6.5" font-weight="bold" fill="#2a9a3a">Y</text><text x="228.5" y="410" font-family="Liberation Sans" font-size="6.5" font-weight="bold" fill="#a02030">X</text><text x="196.5" y="417.5" font-family="Liberation Sans" font-size="6.5" font-weight="bold" fill="#101060">Z</text>
<circle cx="186" cy="437.5" r="3" fill="none" stroke="#222" stroke-width="0.9" stroke-dasharray="1.1 0.9"/>
</g></svg>
<div class="t" style="left:334.00px;top:57.01px;font-size:5.70px;line-height:5.70px;color:#2a3a58;font-weight:bold;-webkit-text-stroke:0.3px currentColor;transform:scaleX(0.856);">Plan: 1</div>
<svg class="a" style="left:0;top:0" width="830" height="466" viewBox="0 0 830 466">
<defs>
<filter id="nz1" x="0" y="0" width="100%" height="100%"><feTurbulence type="fractalNoise" baseFrequency="0.7" numOctaves="2" seed="5" result="n"/><feColorMatrix in="n" type="matrix" values="0 0 0 0 0.2  0 0 0 0 0.21  0 0 0 0 0.24  3.2 0 0 0 -1.75"/><feComposite in2="SourceGraphic" operator="in"/></filter>
<filter id="nz2" x="0" y="0" width="100%" height="100%"><feTurbulence type="fractalNoise" baseFrequency="0.25" numOctaves="3" seed="9" result="n"/><feColorMatrix in="n" type="matrix" values="0 0 0 0 0.5  0 0 0 0 0.51  0 0 0 0 0.52  0.4 0 0 0 -0.17"/><feComposite in2="SourceGraphic" operator="in"/></filter>
<filter id="nz3" x="0" y="0" width="100%" height="100%"><feTurbulence type="fractalNoise" baseFrequency="0.6" numOctaves="2" seed="2" result="n"/><feColorMatrix in="n" type="matrix" values="0 0 0 0 0.75  0 0 0 0 0.77  0 0 0 0 0.82  1.3 0 0 0 -0.55"/><feComposite in2="SourceGraphic" operator="in"/></filter>
<clipPath id="c3d"><rect x="505" y="53.3" width="323.2" height="195"/></clipPath>
</defs>
<g clip-path="url(#c3d)">
<rect x="505" y="53" width="325" height="196" fill="#bbcfe7"/>
<polygon points="560,126 669,125.5 773,130 777,140.4 561,158.4 548,152" fill="#b6b6bc"/>
<polygon points="560,127 669,126 773,130.5 773,134 673,137.5 547,144.5" fill="#fbf7ee"/>
<polyline points="546,135.4 673,130.3 773,131.5" fill="none" stroke="#b88a50" stroke-width="0.8"/>
<polyline points="547,144.5 673,138 773,134" fill="none" stroke="#a88860" stroke-width="0.8"/>
<polyline points="560,127 669,126 773,130" fill="none" stroke="#a08060" stroke-width="0.6"/>
<polygon points="669,64 697,55 697,53 776,53 773,130 669,126" fill="#5a5e62"/>
<polygon points="669,64 697,55 697,53 776,53 773,130 669,126" fill="#5a5e62" filter="url(#nz2)"/>
<polygon points="775.6,53 783,53 778.8,140 772.7,130" fill="#a8a69c"/>
<polygon points="783,53 787.5,53 782.5,160 778.8,158 778.8,140" fill="#2f8e9e"/>
<polygon points="668.5,64 672.5,63 672.5,126.5 668.5,126" fill="#8c8676"/>
<line x1="673" y1="63" x2="673" y2="126" stroke="#c8a050" stroke-width="0.7"/>
<line x1="775.6" y1="53" x2="772.7" y2="130" stroke="#c8a050" stroke-width="0.7"/>
<polyline points="669,126.5 773,130.5" fill="none" stroke="#70c060" stroke-width="1.4"/>
<polygon points="533.9,53 540,53 543,128 546,135 548.5,165.5 558,196 548,196 542.5,160 539.4,120" fill="#1f6272"/>
<polygon points="540.5,53 553,53 557,153 561,158.4 562.2,180 563.5,193.4 558,196 548.5,165.5 546,135 542.5,128" fill="#2e96a6"/>
<polygon points="553,53 571,53 573.8,128 575.5,153 557,153" fill="#87898d"/>
<polygon points="553,53 571,53 573.8,128 575.5,153 557,153" fill="#87898d" filter="url(#nz1)"/>
<g fill="none" stroke="#c8a040" stroke-width="0.7"><line x1="541.5" y1="53" x2="546.5" y2="135"/><line x1="549" y1="53" x2="553" y2="145"/><line x1="553" y1="53" x2="557" y2="153"/><line x1="571" y1="53" x2="575.5" y2="153"/></g>
<g fill="none" stroke="#b8a848" stroke-width="0.6"><polyline points="546,128 575,127"/><polyline points="546,135.4 575,134.2"/><polyline points="547,144.5 575,143"/><line x1="546" y1="128" x2="575" y2="152"/><line x1="548" y1="140" x2="568" y2="153"/></g>
<polygon points="561,158.4 777,140.4 776.2,152.8 562.2,180" fill="#e97a0e"/>
<polygon points="562.2,180 776.2,152.8 775.4,160.8 563.5,193.4" fill="#babac0"/>
<polygon points="563.5,193.4 775.4,160.8 774,180.5 565.5,226.3" fill="#6c7284"/>
<polygon points="563.5,193.4 775.4,160.8 774,180.5 565.5,226.3" fill="#6c7284" filter="url(#nz3)"/>
<g fill="none" stroke="#cc1a28" stroke-width="1.05"><line x1="561" y1="158.4" x2="777" y2="140.4"/><line x1="673" y1="130.3" x2="777" y2="140.4"/><line x1="546" y1="135.4" x2="561" y2="158.4"/><line x1="562.2" y1="180" x2="776.2" y2="152.8"/><line x1="673" y1="138" x2="776.2" y2="152.8"/><line x1="547" y1="144.5" x2="562.2" y2="180"/><line x1="563.5" y1="193.4" x2="775.4" y2="160.8"/><line x1="673" y1="142.6" x2="775.4" y2="160.8"/><line x1="547.5" y1="150.9" x2="563.5" y2="193.4"/><line x1="547.5" y1="150.9" x2="673" y2="142.6"/><line x1="565.5" y1="226.3" x2="774" y2="180.5"/><line x1="673" y1="153.4" x2="774" y2="180.5"/><line x1="548.5" y1="165.5" x2="565.5" y2="226.3"/><line x1="548.5" y1="165.5" x2="673" y2="153.4"/><line x1="561" y1="158.4" x2="565.5" y2="226.3"/><line x1="777" y1="140.4" x2="774" y2="180.5"/><line x1="546" y1="135.4" x2="548.5" y2="165.5"/><line x1="673" y1="130.3" x2="673" y2="153.4"/><line x1="561" y1="158.4" x2="673" y2="153.4"/></g>
<g stroke="#1d3c48" stroke-width="0.8" fill="#d6eaf4"><circle cx="546" cy="135.4" r="2.2"/><circle cx="547" cy="144.5" r="2.2"/><circle cx="547.5" cy="150.9" r="2.2"/><circle cx="548.5" cy="165.5" r="2.2"/><circle cx="673" cy="130.3" r="2.2"/><circle cx="673" cy="138" r="2.2"/><circle cx="673" cy="142.6" r="2.2"/><circle cx="673" cy="153.4" r="2.2"/><circle cx="561" cy="158.4" r="2.2"/><circle cx="562.2" cy="180" r="2.2"/><circle cx="563.5" cy="193.4" r="2.2"/><circle cx="565.5" cy="226.3" r="2.2"/><circle cx="777" cy="140.4" r="2.2"/><circle cx="776.2" cy="152.8" r="2.2"/><circle cx="775.4" cy="160.8" r="2.2"/><circle cx="774" cy="180.5" r="2.2"/></g>
<polygon points="668,53 698,53 698,64 668,64" fill="#b4b8bc" opacity="0.75"/>
<text x="640" y="61.6" font-family="Liberation Sans" font-size="6.4" fill="#56698a" textLength="54" lengthAdjust="spacingAndGlyphs">Central perspective 3</text>
<g stroke="#222" stroke-width="0.6"><line x1="640" y1="106.2" x2="651" y2="106.2"/><line x1="645.5" y1="101" x2="645.5" y2="111.5"/></g><rect x="643" y="103.7" width="5" height="5" fill="#981a30"/>
<line x1="533" y1="191" x2="533" y2="208" stroke="#1a3aa8" stroke-width="1"/><line x1="536" y1="210.5" x2="548" y2="210.5" stroke="#c0202a" stroke-width="1"/><circle cx="532" cy="211" r="4" fill="#d8e0ea" opacity="0.8"/><rect x="531" y="208" width="6" height="5.5" fill="#40d848"/><rect x="528.5" y="208.5" width="3" height="4.5" fill="#e86060"/><text x="530" y="189.5" font-family="Liberation Sans" font-size="6.5" font-weight="bold" fill="#1a3aa8">Z</text><text x="549" y="213" font-family="Liberation Sans" font-size="6.5" font-weight="bold" fill="#c0202a">X</text><text x="519.5" y="212" font-family="Liberation Sans" font-size="6.5" font-weight="bold" fill="#30a030">Y</text>
<circle cx="511.8" cy="241.6" r="4" fill="#e8eef4" opacity="0.8"/><circle cx="511.8" cy="241.6" r="3" fill="none" stroke="#222" stroke-width="0.9" stroke-dasharray="1.1 0.9"/><circle cx="511.8" cy="241.6" r="0.8" fill="#bbb"/>
</g>
<rect x="828.2" y="53" width="0.8" height="391" fill="#a8b0b8"/>
</svg>
<svg class="a" style="left:0;top:0" width="830" height="466" viewBox="0 0 830 466">
<rect x="505" y="247.6" width="325" height="196" fill="#fff"/>
<rect x="828.3" y="248" width="0.9" height="196" fill="#b0b6bc"/>
<rect x="504.6" y="247.6" width="0.9" height="196" fill="#c4cad0"/>
<rect x="519.8" y="266.5" width="294.6" height="160.9" fill="none" stroke="#d4dcae" stroke-width="0.8"/>
<path d="M561,406.5 V266.5 H575.8 V375.4" fill="none" stroke="#6a7078" stroke-width="0.8"/>
<path d="M561,266.5 H575.8" fill="none" stroke="#555" stroke-width="0.8"/>
<path d="M567.2,266.5 V382 H575.8" fill="none" stroke="#9ad0a0" stroke-width="0.8"/>
<path d="M575.8,266.5 V375.4 H766 V266.5" fill="none" stroke="#a8d8a8" stroke-width="0.8"/>
<path d="M561,406.5 H567" stroke="#6a7078" stroke-width="0.8"/>
<path d="M766.4,266.5 H781.2 V406 H775" fill="none" stroke="#555c64" stroke-width="0.8"/>
<path d="M766.4,266.5 V380 H774.4" fill="none" stroke="#9ad0a0" stroke-width="0.8"/>
<path d="M774.4,266.5 V384" fill="none" stroke="#a8e0b0" stroke-width="1"/>
<line x1="567" y1="384.1" x2="774.4" y2="384.1" stroke="#6a6a40" stroke-width="0.9"/>
<line x1="567" y1="397.4" x2="774.4" y2="397.4" stroke="#d08898" stroke-width="0.9"/>
<line x1="567" y1="406.1" x2="774.4" y2="406.1" stroke="#d08898" stroke-width="0.9"/>
<line x1="567" y1="427.4" x2="774.4" y2="427.4" stroke="#d08898" stroke-width="0.9"/>
<path d="M567,384 V427.4 M774.4,384 V427.4" stroke="#c07080" stroke-width="0.7"/>
<g fill="#e8f2f6" stroke="#385060" stroke-width="0.7"><circle cx="567" cy="384.1" r="1.9"/><circle cx="774.4" cy="384.1" r="1.9"/><circle cx="567" cy="397.4" r="1.9"/><circle cx="774.4" cy="397.4" r="1.9"/><circle cx="567" cy="406.1" r="1.9"/><circle cx="774.4" cy="406.1" r="1.9"/><circle cx="567" cy="427.4" r="1.9"/><circle cx="774.4" cy="427.4" r="1.9"/></g>
<g stroke="#444" stroke-width="0.5"><line x1="665.5" y1="346.7" x2="675.7" y2="346.7"/><line x1="670.6" y1="341.6" x2="670.6" y2="351.8"/></g><rect x="668.1" y="344.2" width="5" height="5" fill="#7a1a2a"/>
<line x1="531.5" y1="386" x2="531.5" y2="407.8" stroke="#14207a" stroke-width="1"/><line x1="531" y1="407.8" x2="552" y2="407.8" stroke="#a02030" stroke-width="0.9"/><line x1="520" y1="407.8" x2="531" y2="407.8" stroke="#e0e8e0" stroke-width="0.5"/><line x1="531" y1="408" x2="531" y2="419" stroke="#e0e8e0" stroke-width="0.5"/><rect x="528" y="404.8" width="6" height="6" fill="#50e050"/><text x="528.5" y="385.5" font-family="Liberation Sans" font-size="6.5" font-weight="bold" fill="#1a2a98">Z</text><text x="553.5" y="410.3" font-family="Liberation Sans" font-size="6.5" font-weight="bold" fill="#a02030">X</text><text x="522" y="417.5" font-family="Liberation Sans" font-size="6.5" font-weight="bold" fill="#2a8a3a">Y</text>
<circle cx="512" cy="436.7" r="3" fill="none" stroke="#222" stroke-width="0.9" stroke-dasharray="1.1 0.9"/>
<rect x="632.3" y="250.4" width="68.7" height="10.6" fill="#dfe7f0" stroke="#c4d0de" stroke-width="0.6"/>
</svg>
<div class="t" style="left:635.50px;top:253.14px;font-size:6.65px;line-height:6.65px;color:#5a6a80;transform:scaleX(0.883);-webkit-text-stroke:0;">Front; South Elevation 2</div>
<div class="a" style="left:0.00px;top:443.50px;width:830.00px;height:13.00px;background:#d2e0ef;"></div>
<div class="a" style="left:0.00px;top:443.30px;width:830.00px;height:0.70px;background:#b8c8da;"></div>
<div class="a" style="left:2.70px;top:445.30px;width:267.30px;height:11.10px;background:#fff;border:0.7px solid #a0a8b0;"></div>
<div class="t" style="left:5.70px;top:448.61px;font-size:5.70px;line-height:5.70px;color:#111;font-weight:bold;-webkit-text-stroke:0.3px currentColor;transform:scaleX(0.909);">Click to select; Ctrl+click to add; Shift+click to select entity group; click selected element for subselection</div>
<div class="a" style="left:0.00px;top:456.50px;width:830.00px;height:9.50px;background:#f0f0f0;"></div>
<div class="t" style="left:0.80px;top:459.61px;font-size:5.70px;line-height:5.70px;color:#222;transform:scaleX(0.855);">Press F1 to get Help.</div>
<div class="t" style="left:244.60px;top:459.61px;font-size:5.70px;line-height:5.70px;color:#222;transform:scaleX(0.947);">Country:</div>
<div class="t" style="left:267.50px;top:459.61px;font-size:5.70px;line-height:5.70px;color:#222;transform:scaleX(0.900);">Germany</div>
<div class="t" style="left:330.70px;top:459.61px;font-size:5.70px;line-height:5.70px;color:#222;transform:scaleX(0.910);">Graphic override:</div>
<div class="t" style="left:373.90px;top:459.61px;font-size:5.70px;line-height:5.70px;color:#222;transform:scaleX(0.947);">Off</div>
<div class="t" style="left:476.50px;top:459.61px;font-size:5.70px;line-height:5.70px;color:#222;transform:scaleX(0.898);">Drawing type:</div>
<div class="t" style="left:511.00px;top:459.61px;font-size:5.70px;line-height:5.70px;color:#222;transform:scaleX(0.921);">Scale definition</div>
<div class="t" style="left:615.80px;top:459.61px;font-size:5.70px;line-height:5.70px;color:#222;transform:scaleX(0.852);">Scale:</div>
<div class="t" style="left:632.70px;top:459.61px;font-size:5.70px;line-height:5.70px;color:#222;transform:scaleX(0.827);">1 : 50</div>
<div class="t" style="left:661.30px;top:459.61px;font-size:5.70px;line-height:5.70px;color:#222;transform:scaleX(0.889);">Length:</div>
<div class="t" style="left:681.60px;top:459.61px;font-size:5.70px;line-height:5.70px;color:#b0b0b0;transform:scaleX(0.927);">m</div>
<div class="t" style="left:703.50px;top:459.61px;font-size:5.70px;line-height:5.70px;color:#222;transform:scaleX(0.940);">Angle:</div>
<div class="t" style="left:722.00px;top:459.61px;font-size:5.70px;line-height:5.70px;color:#c0c0c0;transform:scaleX(1.024);">0.000</div>
<div class="t" style="left:742.30px;top:459.61px;font-size:5.70px;line-height:5.70px;color:#b8b8b8;transform:scaleX(1.020);">deg</div>
<div class="t" style="left:764.20px;top:459.61px;font-size:5.70px;line-height:5.70px;color:#222;transform:scaleX(0.872);">%:</div>
<div class="t" style="left:773.50px;top:459.61px;font-size:5.70px;line-height:5.70px;color:#222;transform:scaleX(0.631);">1</div>
<div class="t" style="left:794.60px;top:459.61px;font-size:5.70px;line-height:5.70px;color:#222;transform:scaleX(0.979);">Notifications</div>
<div class="a" style="left:786.00px;top:458.50px;width:6.50px;height:6.50px;background:#fff;border:0.6px solid #c04050;"></div>
<div class="a" style="left:788.80px;top:459.60px;width:0.90px;height:2.60px;background:#b02030;"></div>
<div class="a" style="left:788.80px;top:462.90px;width:0.90px;height:0.90px;background:#b02030;"></div>
</body></html>
